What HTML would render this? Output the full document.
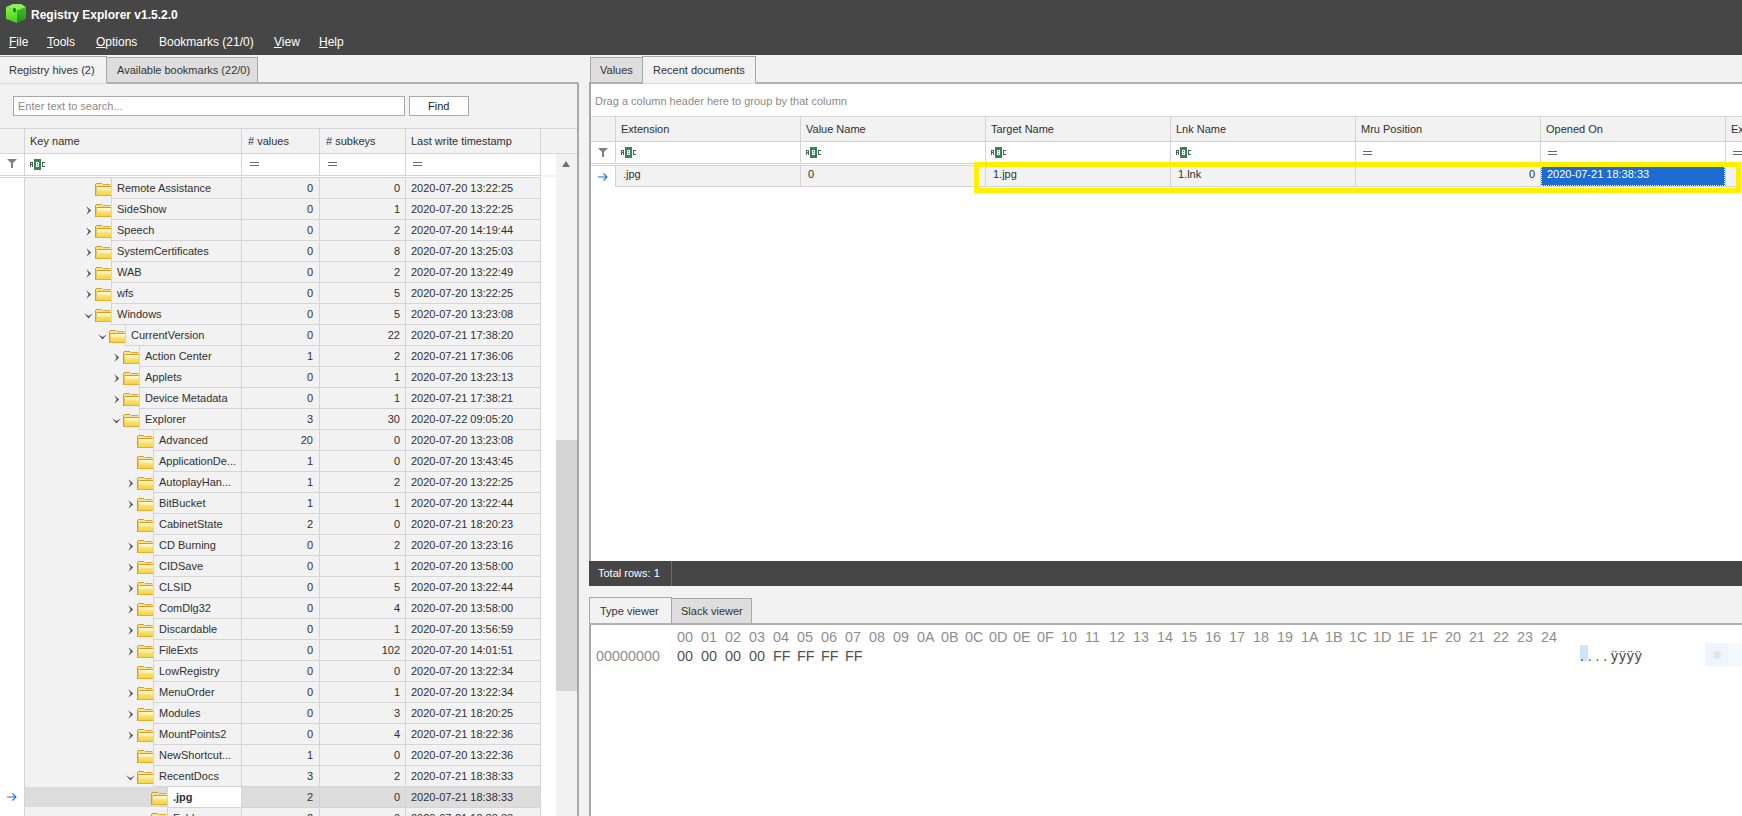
<!DOCTYPE html>
<html><head><meta charset="utf-8"><style>
*{margin:0;padding:0;box-sizing:border-box}
html,body{width:1742px;height:816px;overflow:hidden;background:#f2f2f2;font-family:"Liberation Sans", sans-serif;font-size:11px;color:#303030}
.t{position:absolute;white-space:nowrap;line-height:0;height:0}
.t>span{display:inline-block;vertical-align:baseline}
.r{position:absolute;white-space:nowrap;line-height:0;height:0;text-align:right}
</style></head>
<body>
<div style="position:absolute;left:0px;top:0px;width:1742px;height:55px;background:#464646"></div>
<svg style="position:absolute;left:0px;top:0px" width="30" height="28" viewBox="0 0 30 28">
<defs><linearGradient id="cl" x1="0" y1="0" x2="0" y2="1"><stop offset="0" stop-color="#86f83a"/><stop offset="1" stop-color="#48c828"/></linearGradient>
<linearGradient id="cr" x1="0" y1="0" x2="0" y2="1"><stop offset="0" stop-color="#48c030"/><stop offset="1" stop-color="#1f9016"/></linearGradient></defs>
<path d="M6 7 L17 10.5 L17 23 L6 19 Z" fill="url(#cl)"/>
<path d="M17 10.5 L26 7 L26 19 L17 23 Z" fill="url(#cr)"/>
<path d="M6 7 L13 4 L21 4 L26 7 L17 10.5 Z" fill="#8cf058"/>
<path d="M13 8.5 Q15 7.5 16 9 L15.5 12.5 Q13.5 12 13 11 Z" fill="#0e7a10"/>
</svg>
<div class="t" style="left:31px;top:14.84px;color:#fff;font-weight:bold;font-size:12px">Registry Explorer v1.5.2.0</div>
<div class="t" style="left:9px;top:41.84px;color:#fff;font-size:12px"><u style="text-decoration-thickness:1px;text-underline-offset:1px">F</u>ile</div>
<div class="t" style="left:47px;top:41.84px;color:#fff;font-size:12px"><u style="text-decoration-thickness:1px;text-underline-offset:1px">T</u>ools</div>
<div class="t" style="left:96px;top:41.84px;color:#fff;font-size:12px"><u style="text-decoration-thickness:1px;text-underline-offset:1px">O</u>ptions</div>
<div class="t" style="left:159px;top:41.84px;color:#fff;font-size:12px">Bookmarks (21/0)</div>
<div class="t" style="left:274px;top:41.84px;color:#fff;font-size:12px"><u style="text-decoration-thickness:1px;text-underline-offset:1px">V</u>iew</div>
<div class="t" style="left:319px;top:41.84px;color:#fff;font-size:12px"><u style="text-decoration-thickness:1px;text-underline-offset:1px">H</u>elp</div>
<div style="position:absolute;left:0px;top:55px;width:590px;height:28px;background:#f2f2f2"></div>
<div style="position:absolute;left:106px;top:57px;width:152px;height:27px;background:#dedede;border:1px solid #a8a8a8;border-bottom:none"></div>
<div class="t" style="left:117px;top:70.19px;font-size:11px;color:#333">Available bookmarks (22/0)</div>
<div style="position:absolute;left:0px;top:56px;width:107px;height:28px;background:#f2f2f2;border-top:1px solid #a8a8a8;border-right:1px solid #a8a8a8"></div>
<div class="t" style="left:9px;top:70.19px;font-size:11px;color:#333">Registry hives (2)</div>
<div style="position:absolute;left:107px;top:82px;width:471px;height:2px;background:#b0b0b0"></div>
<div style="position:absolute;left:0px;top:83px;width:107px;height:1px;background:#dcdcdc"></div>
<div style="position:absolute;left:577px;top:83px;width:2px;height:733px;background:#a8a8a8"></div>
<div style="position:absolute;left:13px;top:96px;width:392px;height:20px;background:#fff;border:1px solid #a8a8a8"></div>
<div class="t" style="left:18px;top:106.19px;color:#8a8a8a">Enter text to search...</div>
<div style="position:absolute;left:409px;top:96px;width:60px;height:20px;background:#fff;border:1px solid #a8a8a8"></div>
<div class="t" style="left:428px;top:106.19px;color:#222">Find</div>
<div style="position:absolute;left:0px;top:128px;width:577px;height:26px;background:#f2f2f2;border-top:1px solid #d4d4d4;border-bottom:1px solid #d4d4d4"></div>
<div style="position:absolute;left:24px;top:128px;width:1px;height:48px;background:#d4d4d4"></div>
<div style="position:absolute;left:241px;top:128px;width:1px;height:48px;background:#d4d4d4"></div>
<div style="position:absolute;left:319px;top:128px;width:1px;height:48px;background:#d4d4d4"></div>
<div style="position:absolute;left:405px;top:128px;width:1px;height:48px;background:#d4d4d4"></div>
<div style="position:absolute;left:540px;top:128px;width:1px;height:48px;background:#d4d4d4"></div>
<div class="t" style="left:30px;top:141.19px;">Key name</div>
<div class="t" style="left:248px;top:141.19px;"># values</div>
<div class="t" style="left:326px;top:141.19px;"># subkeys</div>
<div class="t" style="left:411px;top:141.19px;">Last write timestamp</div>
<div style="position:absolute;left:0px;top:154px;width:556px;height:21px;background:#fff"></div>
<div style="position:absolute;left:24px;top:154px;width:1px;height:21px;background:#d4d4d4"></div>
<div style="position:absolute;left:241px;top:154px;width:1px;height:21px;background:#d4d4d4"></div>
<div style="position:absolute;left:319px;top:154px;width:1px;height:21px;background:#d4d4d4"></div>
<div style="position:absolute;left:405px;top:154px;width:1px;height:21px;background:#d4d4d4"></div>
<div style="position:absolute;left:540px;top:154px;width:1px;height:21px;background:#d4d4d4"></div>
<div style="position:absolute;left:0px;top:175px;width:541px;height:1px;background:#d4d4d4"></div>
<div style="position:absolute;left:0px;top:176px;width:541px;height:1px;background:#fff"></div>
<svg style="position:absolute;left:7px;top:159px" width="10" height="9" viewBox="0 0 10 9"><path d="M0 0H10L6 4V9H4V4Z" fill="#808080"/></svg>
<svg style="position:absolute;left:30px;top:159px" width="16" height="11" viewBox="0 0 16 11" shape-rendering="crispEdges"><g fill="#5a5a5a"><rect x="0" y="3" width="1" height="1"/><rect x="1" y="3" width="1" height="1"/><rect x="2" y="3" width="1" height="1"/><rect x="0" y="4" width="1" height="1"/><rect x="2" y="4" width="1" height="1"/><rect x="0" y="5" width="1" height="1"/><rect x="1" y="5" width="1" height="1"/><rect x="2" y="5" width="1" height="1"/><rect x="0" y="6" width="1" height="1"/><rect x="2" y="6" width="1" height="1"/><rect x="0" y="7" width="1" height="1"/><rect x="2" y="7" width="1" height="1"/></g><rect x="4" y="0" width="7" height="11" rx="1" fill="#2f8a4e"/><g fill="#fff"><rect x="6" y="3" width="1" height="1"/><rect x="7" y="3" width="1" height="1"/><rect x="8" y="3" width="1" height="1"/><rect x="6" y="4" width="1" height="1"/><rect x="8" y="4" width="1" height="1"/><rect x="6" y="5" width="1" height="1"/><rect x="7" y="5" width="1" height="1"/><rect x="8" y="5" width="1" height="1"/><rect x="6" y="6" width="1" height="1"/><rect x="8" y="6" width="1" height="1"/><rect x="6" y="7" width="1" height="1"/><rect x="7" y="7" width="1" height="1"/><rect x="8" y="7" width="1" height="1"/></g><g fill="#5a5a5a"><rect x="12" y="3" width="1" height="1"/><rect x="13" y="3" width="1" height="1"/><rect x="14" y="3" width="1" height="1"/><rect x="12" y="4" width="1" height="1"/><rect x="12" y="5" width="1" height="1"/><rect x="12" y="6" width="1" height="1"/><rect x="12" y="7" width="1" height="1"/><rect x="13" y="7" width="1" height="1"/><rect x="14" y="7" width="1" height="1"/></g></svg>
<div style="position:absolute;left:250px;top:162px;width:9px;height:1px;background:#6a6a6a"></div>
<div style="position:absolute;left:250px;top:165px;width:9px;height:1px;background:#6a6a6a"></div>
<div style="position:absolute;left:328px;top:162px;width:9px;height:1px;background:#6a6a6a"></div>
<div style="position:absolute;left:328px;top:165px;width:9px;height:1px;background:#6a6a6a"></div>
<div style="position:absolute;left:413px;top:162px;width:9px;height:1px;background:#6a6a6a"></div>
<div style="position:absolute;left:413px;top:165px;width:9px;height:1px;background:#6a6a6a"></div>
<div style="position:absolute;left:556px;top:154px;width:21px;height:662px;background:#f2f2f2"></div>
<svg style="position:absolute;left:562px;top:161px" width="8" height="6" viewBox="0 0 8 6"><path d="M4 0L8 6H0Z" fill="#707070"/></svg>
<div style="position:absolute;left:556px;top:440px;width:21px;height:251px;background:#d4d4d4"></div>
<div style="position:absolute;left:0px;top:177px;width:24px;height:639px;background:#fff"></div>
<div style="position:absolute;left:541px;top:177px;width:15px;height:639px;background:#fff"></div>
<div style="position:absolute;left:24px;top:177px;width:517px;height:639px;background:#f2f2f2"></div>
<div style="position:absolute;left:0px;top:177px;width:541px;height:1px;background:#d4d4d4"></div>
<div style="position:absolute;left:24px;top:177px;width:1px;height:639px;background:#d4d4d4"></div>
<div style="position:absolute;left:111px;top:198px;width:430px;height:1px;background:#d4d4d4"></div>
<div style="position:absolute;left:111px;top:177px;width:1px;height:21px;background:#d4d4d4"></div>
<div style="position:absolute;left:241px;top:177px;width:1px;height:21px;background:#d4d4d4"></div>
<div style="position:absolute;left:319px;top:177px;width:1px;height:21px;background:#d4d4d4"></div>
<div style="position:absolute;left:405px;top:177px;width:1px;height:21px;background:#d4d4d4"></div>
<div style="position:absolute;left:540px;top:177px;width:1px;height:21px;background:#d4d4d4"></div>
<svg style="position:absolute;left:95px;top:183px" width="16" height="13" viewBox="0 0 16 13" shape-rendering="crispEdges">
<defs><linearGradient id="fg" x1="0" y1="0" x2="0" y2="1"><stop offset="0" stop-color="#fffce0"/><stop offset="0.35" stop-color="#fbeea0"/><stop offset="0.5" stop-color="#f6e070"/><stop offset="1" stop-color="#f2d648"/></linearGradient></defs>
<rect x="1" y="1" width="15" height="2" fill="#f8e48a"/>
<rect x="1" y="0" width="6" height="1" fill="#d99a30"/>
<rect x="8" y="1" width="7" height="1" fill="#dfa43a"/>
<rect x="0" y="1" width="1" height="12" fill="#dc9a28"/>
<rect x="1" y="3" width="1" height="10" fill="#f0c850"/>
<rect x="2" y="3" width="14" height="1" fill="#d9982a"/>
<rect x="2" y="4" width="14" height="8" fill="url(#fg)"/>
<rect x="1" y="12" width="15" height="1" fill="#e6ad2e"/>
</svg>
<div class="t" style="left:117px;top:188.19px;">Remote Assistance</div>
<div class="r" style="left:241px;width:72px;top:188.19px">0</div>
<div class="r" style="left:319px;width:81px;top:188.19px">0</div>
<div class="t" style="left:411px;top:188.19px;">2020-07-20 13:22:25</div>
<div style="position:absolute;left:111px;top:219px;width:430px;height:1px;background:#d4d4d4"></div>
<div style="position:absolute;left:111px;top:198px;width:1px;height:21px;background:#d4d4d4"></div>
<div style="position:absolute;left:241px;top:198px;width:1px;height:21px;background:#d4d4d4"></div>
<div style="position:absolute;left:319px;top:198px;width:1px;height:21px;background:#d4d4d4"></div>
<div style="position:absolute;left:405px;top:198px;width:1px;height:21px;background:#d4d4d4"></div>
<div style="position:absolute;left:540px;top:198px;width:1px;height:21px;background:#d4d4d4"></div>
<svg style="position:absolute;left:95px;top:204px" width="16" height="13" viewBox="0 0 16 13" shape-rendering="crispEdges">
<defs><linearGradient id="fg" x1="0" y1="0" x2="0" y2="1"><stop offset="0" stop-color="#fffce0"/><stop offset="0.35" stop-color="#fbeea0"/><stop offset="0.5" stop-color="#f6e070"/><stop offset="1" stop-color="#f2d648"/></linearGradient></defs>
<rect x="1" y="1" width="15" height="2" fill="#f8e48a"/>
<rect x="1" y="0" width="6" height="1" fill="#d99a30"/>
<rect x="8" y="1" width="7" height="1" fill="#dfa43a"/>
<rect x="0" y="1" width="1" height="12" fill="#dc9a28"/>
<rect x="1" y="3" width="1" height="10" fill="#f0c850"/>
<rect x="2" y="3" width="14" height="1" fill="#d9982a"/>
<rect x="2" y="4" width="14" height="8" fill="url(#fg)"/>
<rect x="1" y="12" width="15" height="1" fill="#e6ad2e"/>
</svg>
<svg style="position:absolute;left:86px;top:206px" width="6" height="9" viewBox="0 0 6 9"><path d="M0.3 0.3L5.2 4.5L0.3 8.7L2.6 4.5Z" fill="#555"/></svg>
<div class="t" style="left:117px;top:209.19px;">SideShow</div>
<div class="r" style="left:241px;width:72px;top:209.19px">0</div>
<div class="r" style="left:319px;width:81px;top:209.19px">1</div>
<div class="t" style="left:411px;top:209.19px;">2020-07-20 13:22:25</div>
<div style="position:absolute;left:111px;top:240px;width:430px;height:1px;background:#d4d4d4"></div>
<div style="position:absolute;left:111px;top:219px;width:1px;height:21px;background:#d4d4d4"></div>
<div style="position:absolute;left:241px;top:219px;width:1px;height:21px;background:#d4d4d4"></div>
<div style="position:absolute;left:319px;top:219px;width:1px;height:21px;background:#d4d4d4"></div>
<div style="position:absolute;left:405px;top:219px;width:1px;height:21px;background:#d4d4d4"></div>
<div style="position:absolute;left:540px;top:219px;width:1px;height:21px;background:#d4d4d4"></div>
<svg style="position:absolute;left:95px;top:225px" width="16" height="13" viewBox="0 0 16 13" shape-rendering="crispEdges">
<defs><linearGradient id="fg" x1="0" y1="0" x2="0" y2="1"><stop offset="0" stop-color="#fffce0"/><stop offset="0.35" stop-color="#fbeea0"/><stop offset="0.5" stop-color="#f6e070"/><stop offset="1" stop-color="#f2d648"/></linearGradient></defs>
<rect x="1" y="1" width="15" height="2" fill="#f8e48a"/>
<rect x="1" y="0" width="6" height="1" fill="#d99a30"/>
<rect x="8" y="1" width="7" height="1" fill="#dfa43a"/>
<rect x="0" y="1" width="1" height="12" fill="#dc9a28"/>
<rect x="1" y="3" width="1" height="10" fill="#f0c850"/>
<rect x="2" y="3" width="14" height="1" fill="#d9982a"/>
<rect x="2" y="4" width="14" height="8" fill="url(#fg)"/>
<rect x="1" y="12" width="15" height="1" fill="#e6ad2e"/>
</svg>
<svg style="position:absolute;left:86px;top:227px" width="6" height="9" viewBox="0 0 6 9"><path d="M0.3 0.3L5.2 4.5L0.3 8.7L2.6 4.5Z" fill="#555"/></svg>
<div class="t" style="left:117px;top:230.19px;">Speech</div>
<div class="r" style="left:241px;width:72px;top:230.19px">0</div>
<div class="r" style="left:319px;width:81px;top:230.19px">2</div>
<div class="t" style="left:411px;top:230.19px;">2020-07-20 14:19:44</div>
<div style="position:absolute;left:111px;top:261px;width:430px;height:1px;background:#d4d4d4"></div>
<div style="position:absolute;left:111px;top:240px;width:1px;height:21px;background:#d4d4d4"></div>
<div style="position:absolute;left:241px;top:240px;width:1px;height:21px;background:#d4d4d4"></div>
<div style="position:absolute;left:319px;top:240px;width:1px;height:21px;background:#d4d4d4"></div>
<div style="position:absolute;left:405px;top:240px;width:1px;height:21px;background:#d4d4d4"></div>
<div style="position:absolute;left:540px;top:240px;width:1px;height:21px;background:#d4d4d4"></div>
<svg style="position:absolute;left:95px;top:246px" width="16" height="13" viewBox="0 0 16 13" shape-rendering="crispEdges">
<defs><linearGradient id="fg" x1="0" y1="0" x2="0" y2="1"><stop offset="0" stop-color="#fffce0"/><stop offset="0.35" stop-color="#fbeea0"/><stop offset="0.5" stop-color="#f6e070"/><stop offset="1" stop-color="#f2d648"/></linearGradient></defs>
<rect x="1" y="1" width="15" height="2" fill="#f8e48a"/>
<rect x="1" y="0" width="6" height="1" fill="#d99a30"/>
<rect x="8" y="1" width="7" height="1" fill="#dfa43a"/>
<rect x="0" y="1" width="1" height="12" fill="#dc9a28"/>
<rect x="1" y="3" width="1" height="10" fill="#f0c850"/>
<rect x="2" y="3" width="14" height="1" fill="#d9982a"/>
<rect x="2" y="4" width="14" height="8" fill="url(#fg)"/>
<rect x="1" y="12" width="15" height="1" fill="#e6ad2e"/>
</svg>
<svg style="position:absolute;left:86px;top:248px" width="6" height="9" viewBox="0 0 6 9"><path d="M0.3 0.3L5.2 4.5L0.3 8.7L2.6 4.5Z" fill="#555"/></svg>
<div class="t" style="left:117px;top:251.19px;">SystemCertificates</div>
<div class="r" style="left:241px;width:72px;top:251.19px">0</div>
<div class="r" style="left:319px;width:81px;top:251.19px">8</div>
<div class="t" style="left:411px;top:251.19px;">2020-07-20 13:25:03</div>
<div style="position:absolute;left:111px;top:282px;width:430px;height:1px;background:#d4d4d4"></div>
<div style="position:absolute;left:111px;top:261px;width:1px;height:21px;background:#d4d4d4"></div>
<div style="position:absolute;left:241px;top:261px;width:1px;height:21px;background:#d4d4d4"></div>
<div style="position:absolute;left:319px;top:261px;width:1px;height:21px;background:#d4d4d4"></div>
<div style="position:absolute;left:405px;top:261px;width:1px;height:21px;background:#d4d4d4"></div>
<div style="position:absolute;left:540px;top:261px;width:1px;height:21px;background:#d4d4d4"></div>
<svg style="position:absolute;left:95px;top:267px" width="16" height="13" viewBox="0 0 16 13" shape-rendering="crispEdges">
<defs><linearGradient id="fg" x1="0" y1="0" x2="0" y2="1"><stop offset="0" stop-color="#fffce0"/><stop offset="0.35" stop-color="#fbeea0"/><stop offset="0.5" stop-color="#f6e070"/><stop offset="1" stop-color="#f2d648"/></linearGradient></defs>
<rect x="1" y="1" width="15" height="2" fill="#f8e48a"/>
<rect x="1" y="0" width="6" height="1" fill="#d99a30"/>
<rect x="8" y="1" width="7" height="1" fill="#dfa43a"/>
<rect x="0" y="1" width="1" height="12" fill="#dc9a28"/>
<rect x="1" y="3" width="1" height="10" fill="#f0c850"/>
<rect x="2" y="3" width="14" height="1" fill="#d9982a"/>
<rect x="2" y="4" width="14" height="8" fill="url(#fg)"/>
<rect x="1" y="12" width="15" height="1" fill="#e6ad2e"/>
</svg>
<svg style="position:absolute;left:86px;top:269px" width="6" height="9" viewBox="0 0 6 9"><path d="M0.3 0.3L5.2 4.5L0.3 8.7L2.6 4.5Z" fill="#555"/></svg>
<div class="t" style="left:117px;top:272.19px;">WAB</div>
<div class="r" style="left:241px;width:72px;top:272.19px">0</div>
<div class="r" style="left:319px;width:81px;top:272.19px">2</div>
<div class="t" style="left:411px;top:272.19px;">2020-07-20 13:22:49</div>
<div style="position:absolute;left:111px;top:303px;width:430px;height:1px;background:#d4d4d4"></div>
<div style="position:absolute;left:111px;top:282px;width:1px;height:21px;background:#d4d4d4"></div>
<div style="position:absolute;left:241px;top:282px;width:1px;height:21px;background:#d4d4d4"></div>
<div style="position:absolute;left:319px;top:282px;width:1px;height:21px;background:#d4d4d4"></div>
<div style="position:absolute;left:405px;top:282px;width:1px;height:21px;background:#d4d4d4"></div>
<div style="position:absolute;left:540px;top:282px;width:1px;height:21px;background:#d4d4d4"></div>
<svg style="position:absolute;left:95px;top:288px" width="16" height="13" viewBox="0 0 16 13" shape-rendering="crispEdges">
<defs><linearGradient id="fg" x1="0" y1="0" x2="0" y2="1"><stop offset="0" stop-color="#fffce0"/><stop offset="0.35" stop-color="#fbeea0"/><stop offset="0.5" stop-color="#f6e070"/><stop offset="1" stop-color="#f2d648"/></linearGradient></defs>
<rect x="1" y="1" width="15" height="2" fill="#f8e48a"/>
<rect x="1" y="0" width="6" height="1" fill="#d99a30"/>
<rect x="8" y="1" width="7" height="1" fill="#dfa43a"/>
<rect x="0" y="1" width="1" height="12" fill="#dc9a28"/>
<rect x="1" y="3" width="1" height="10" fill="#f0c850"/>
<rect x="2" y="3" width="14" height="1" fill="#d9982a"/>
<rect x="2" y="4" width="14" height="8" fill="url(#fg)"/>
<rect x="1" y="12" width="15" height="1" fill="#e6ad2e"/>
</svg>
<svg style="position:absolute;left:86px;top:290px" width="6" height="9" viewBox="0 0 6 9"><path d="M0.3 0.3L5.2 4.5L0.3 8.7L2.6 4.5Z" fill="#555"/></svg>
<div class="t" style="left:117px;top:293.19px;">wfs</div>
<div class="r" style="left:241px;width:72px;top:293.19px">0</div>
<div class="r" style="left:319px;width:81px;top:293.19px">5</div>
<div class="t" style="left:411px;top:293.19px;">2020-07-20 13:22:25</div>
<div style="position:absolute;left:111px;top:324px;width:430px;height:1px;background:#d4d4d4"></div>
<div style="position:absolute;left:111px;top:303px;width:1px;height:21px;background:#d4d4d4"></div>
<div style="position:absolute;left:241px;top:303px;width:1px;height:21px;background:#d4d4d4"></div>
<div style="position:absolute;left:319px;top:303px;width:1px;height:21px;background:#d4d4d4"></div>
<div style="position:absolute;left:405px;top:303px;width:1px;height:21px;background:#d4d4d4"></div>
<div style="position:absolute;left:540px;top:303px;width:1px;height:21px;background:#d4d4d4"></div>
<svg style="position:absolute;left:95px;top:309px" width="16" height="13" viewBox="0 0 16 13" shape-rendering="crispEdges">
<defs><linearGradient id="fg" x1="0" y1="0" x2="0" y2="1"><stop offset="0" stop-color="#fffce0"/><stop offset="0.35" stop-color="#fbeea0"/><stop offset="0.5" stop-color="#f6e070"/><stop offset="1" stop-color="#f2d648"/></linearGradient></defs>
<rect x="1" y="1" width="15" height="2" fill="#f8e48a"/>
<rect x="1" y="0" width="6" height="1" fill="#d99a30"/>
<rect x="8" y="1" width="7" height="1" fill="#dfa43a"/>
<rect x="0" y="1" width="1" height="12" fill="#dc9a28"/>
<rect x="1" y="3" width="1" height="10" fill="#f0c850"/>
<rect x="2" y="3" width="14" height="1" fill="#d9982a"/>
<rect x="2" y="4" width="14" height="8" fill="url(#fg)"/>
<rect x="1" y="12" width="15" height="1" fill="#e6ad2e"/>
</svg>
<svg style="position:absolute;left:84px;top:313px" width="9" height="6" viewBox="0 0 9 6"><path d="M0.2 0.5L4.5 5.6L8.8 0.5L4.5 3Z" fill="#555"/></svg>
<div class="t" style="left:117px;top:314.19px;">Windows</div>
<div class="r" style="left:241px;width:72px;top:314.19px">0</div>
<div class="r" style="left:319px;width:81px;top:314.19px">5</div>
<div class="t" style="left:411px;top:314.19px;">2020-07-20 13:23:08</div>
<div style="position:absolute;left:125px;top:345px;width:416px;height:1px;background:#d4d4d4"></div>
<div style="position:absolute;left:125px;top:324px;width:1px;height:21px;background:#d4d4d4"></div>
<div style="position:absolute;left:241px;top:324px;width:1px;height:21px;background:#d4d4d4"></div>
<div style="position:absolute;left:319px;top:324px;width:1px;height:21px;background:#d4d4d4"></div>
<div style="position:absolute;left:405px;top:324px;width:1px;height:21px;background:#d4d4d4"></div>
<div style="position:absolute;left:540px;top:324px;width:1px;height:21px;background:#d4d4d4"></div>
<svg style="position:absolute;left:109px;top:330px" width="16" height="13" viewBox="0 0 16 13" shape-rendering="crispEdges">
<defs><linearGradient id="fg" x1="0" y1="0" x2="0" y2="1"><stop offset="0" stop-color="#fffce0"/><stop offset="0.35" stop-color="#fbeea0"/><stop offset="0.5" stop-color="#f6e070"/><stop offset="1" stop-color="#f2d648"/></linearGradient></defs>
<rect x="1" y="1" width="15" height="2" fill="#f8e48a"/>
<rect x="1" y="0" width="6" height="1" fill="#d99a30"/>
<rect x="8" y="1" width="7" height="1" fill="#dfa43a"/>
<rect x="0" y="1" width="1" height="12" fill="#dc9a28"/>
<rect x="1" y="3" width="1" height="10" fill="#f0c850"/>
<rect x="2" y="3" width="14" height="1" fill="#d9982a"/>
<rect x="2" y="4" width="14" height="8" fill="url(#fg)"/>
<rect x="1" y="12" width="15" height="1" fill="#e6ad2e"/>
</svg>
<svg style="position:absolute;left:98px;top:334px" width="9" height="6" viewBox="0 0 9 6"><path d="M0.2 0.5L4.5 5.6L8.8 0.5L4.5 3Z" fill="#555"/></svg>
<div class="t" style="left:131px;top:335.19px;">CurrentVersion</div>
<div class="r" style="left:241px;width:72px;top:335.19px">0</div>
<div class="r" style="left:319px;width:81px;top:335.19px">22</div>
<div class="t" style="left:411px;top:335.19px;">2020-07-21 17:38:20</div>
<div style="position:absolute;left:139px;top:366px;width:402px;height:1px;background:#d4d4d4"></div>
<div style="position:absolute;left:139px;top:345px;width:1px;height:21px;background:#d4d4d4"></div>
<div style="position:absolute;left:241px;top:345px;width:1px;height:21px;background:#d4d4d4"></div>
<div style="position:absolute;left:319px;top:345px;width:1px;height:21px;background:#d4d4d4"></div>
<div style="position:absolute;left:405px;top:345px;width:1px;height:21px;background:#d4d4d4"></div>
<div style="position:absolute;left:540px;top:345px;width:1px;height:21px;background:#d4d4d4"></div>
<svg style="position:absolute;left:123px;top:351px" width="16" height="13" viewBox="0 0 16 13" shape-rendering="crispEdges">
<defs><linearGradient id="fg" x1="0" y1="0" x2="0" y2="1"><stop offset="0" stop-color="#fffce0"/><stop offset="0.35" stop-color="#fbeea0"/><stop offset="0.5" stop-color="#f6e070"/><stop offset="1" stop-color="#f2d648"/></linearGradient></defs>
<rect x="1" y="1" width="15" height="2" fill="#f8e48a"/>
<rect x="1" y="0" width="6" height="1" fill="#d99a30"/>
<rect x="8" y="1" width="7" height="1" fill="#dfa43a"/>
<rect x="0" y="1" width="1" height="12" fill="#dc9a28"/>
<rect x="1" y="3" width="1" height="10" fill="#f0c850"/>
<rect x="2" y="3" width="14" height="1" fill="#d9982a"/>
<rect x="2" y="4" width="14" height="8" fill="url(#fg)"/>
<rect x="1" y="12" width="15" height="1" fill="#e6ad2e"/>
</svg>
<svg style="position:absolute;left:114px;top:353px" width="6" height="9" viewBox="0 0 6 9"><path d="M0.3 0.3L5.2 4.5L0.3 8.7L2.6 4.5Z" fill="#555"/></svg>
<div class="t" style="left:145px;top:356.19px;">Action Center</div>
<div class="r" style="left:241px;width:72px;top:356.19px">1</div>
<div class="r" style="left:319px;width:81px;top:356.19px">2</div>
<div class="t" style="left:411px;top:356.19px;">2020-07-21 17:36:06</div>
<div style="position:absolute;left:139px;top:387px;width:402px;height:1px;background:#d4d4d4"></div>
<div style="position:absolute;left:139px;top:366px;width:1px;height:21px;background:#d4d4d4"></div>
<div style="position:absolute;left:241px;top:366px;width:1px;height:21px;background:#d4d4d4"></div>
<div style="position:absolute;left:319px;top:366px;width:1px;height:21px;background:#d4d4d4"></div>
<div style="position:absolute;left:405px;top:366px;width:1px;height:21px;background:#d4d4d4"></div>
<div style="position:absolute;left:540px;top:366px;width:1px;height:21px;background:#d4d4d4"></div>
<svg style="position:absolute;left:123px;top:372px" width="16" height="13" viewBox="0 0 16 13" shape-rendering="crispEdges">
<defs><linearGradient id="fg" x1="0" y1="0" x2="0" y2="1"><stop offset="0" stop-color="#fffce0"/><stop offset="0.35" stop-color="#fbeea0"/><stop offset="0.5" stop-color="#f6e070"/><stop offset="1" stop-color="#f2d648"/></linearGradient></defs>
<rect x="1" y="1" width="15" height="2" fill="#f8e48a"/>
<rect x="1" y="0" width="6" height="1" fill="#d99a30"/>
<rect x="8" y="1" width="7" height="1" fill="#dfa43a"/>
<rect x="0" y="1" width="1" height="12" fill="#dc9a28"/>
<rect x="1" y="3" width="1" height="10" fill="#f0c850"/>
<rect x="2" y="3" width="14" height="1" fill="#d9982a"/>
<rect x="2" y="4" width="14" height="8" fill="url(#fg)"/>
<rect x="1" y="12" width="15" height="1" fill="#e6ad2e"/>
</svg>
<svg style="position:absolute;left:114px;top:374px" width="6" height="9" viewBox="0 0 6 9"><path d="M0.3 0.3L5.2 4.5L0.3 8.7L2.6 4.5Z" fill="#555"/></svg>
<div class="t" style="left:145px;top:377.19px;">Applets</div>
<div class="r" style="left:241px;width:72px;top:377.19px">0</div>
<div class="r" style="left:319px;width:81px;top:377.19px">1</div>
<div class="t" style="left:411px;top:377.19px;">2020-07-20 13:23:13</div>
<div style="position:absolute;left:139px;top:408px;width:402px;height:1px;background:#d4d4d4"></div>
<div style="position:absolute;left:139px;top:387px;width:1px;height:21px;background:#d4d4d4"></div>
<div style="position:absolute;left:241px;top:387px;width:1px;height:21px;background:#d4d4d4"></div>
<div style="position:absolute;left:319px;top:387px;width:1px;height:21px;background:#d4d4d4"></div>
<div style="position:absolute;left:405px;top:387px;width:1px;height:21px;background:#d4d4d4"></div>
<div style="position:absolute;left:540px;top:387px;width:1px;height:21px;background:#d4d4d4"></div>
<svg style="position:absolute;left:123px;top:393px" width="16" height="13" viewBox="0 0 16 13" shape-rendering="crispEdges">
<defs><linearGradient id="fg" x1="0" y1="0" x2="0" y2="1"><stop offset="0" stop-color="#fffce0"/><stop offset="0.35" stop-color="#fbeea0"/><stop offset="0.5" stop-color="#f6e070"/><stop offset="1" stop-color="#f2d648"/></linearGradient></defs>
<rect x="1" y="1" width="15" height="2" fill="#f8e48a"/>
<rect x="1" y="0" width="6" height="1" fill="#d99a30"/>
<rect x="8" y="1" width="7" height="1" fill="#dfa43a"/>
<rect x="0" y="1" width="1" height="12" fill="#dc9a28"/>
<rect x="1" y="3" width="1" height="10" fill="#f0c850"/>
<rect x="2" y="3" width="14" height="1" fill="#d9982a"/>
<rect x="2" y="4" width="14" height="8" fill="url(#fg)"/>
<rect x="1" y="12" width="15" height="1" fill="#e6ad2e"/>
</svg>
<svg style="position:absolute;left:114px;top:395px" width="6" height="9" viewBox="0 0 6 9"><path d="M0.3 0.3L5.2 4.5L0.3 8.7L2.6 4.5Z" fill="#555"/></svg>
<div class="t" style="left:145px;top:398.19px;">Device Metadata</div>
<div class="r" style="left:241px;width:72px;top:398.19px">0</div>
<div class="r" style="left:319px;width:81px;top:398.19px">1</div>
<div class="t" style="left:411px;top:398.19px;">2020-07-21 17:38:21</div>
<div style="position:absolute;left:139px;top:429px;width:402px;height:1px;background:#d4d4d4"></div>
<div style="position:absolute;left:139px;top:408px;width:1px;height:21px;background:#d4d4d4"></div>
<div style="position:absolute;left:241px;top:408px;width:1px;height:21px;background:#d4d4d4"></div>
<div style="position:absolute;left:319px;top:408px;width:1px;height:21px;background:#d4d4d4"></div>
<div style="position:absolute;left:405px;top:408px;width:1px;height:21px;background:#d4d4d4"></div>
<div style="position:absolute;left:540px;top:408px;width:1px;height:21px;background:#d4d4d4"></div>
<svg style="position:absolute;left:123px;top:414px" width="16" height="13" viewBox="0 0 16 13" shape-rendering="crispEdges">
<defs><linearGradient id="fg" x1="0" y1="0" x2="0" y2="1"><stop offset="0" stop-color="#fffce0"/><stop offset="0.35" stop-color="#fbeea0"/><stop offset="0.5" stop-color="#f6e070"/><stop offset="1" stop-color="#f2d648"/></linearGradient></defs>
<rect x="1" y="1" width="15" height="2" fill="#f8e48a"/>
<rect x="1" y="0" width="6" height="1" fill="#d99a30"/>
<rect x="8" y="1" width="7" height="1" fill="#dfa43a"/>
<rect x="0" y="1" width="1" height="12" fill="#dc9a28"/>
<rect x="1" y="3" width="1" height="10" fill="#f0c850"/>
<rect x="2" y="3" width="14" height="1" fill="#d9982a"/>
<rect x="2" y="4" width="14" height="8" fill="url(#fg)"/>
<rect x="1" y="12" width="15" height="1" fill="#e6ad2e"/>
</svg>
<svg style="position:absolute;left:112px;top:418px" width="9" height="6" viewBox="0 0 9 6"><path d="M0.2 0.5L4.5 5.6L8.8 0.5L4.5 3Z" fill="#555"/></svg>
<div class="t" style="left:145px;top:419.19px;">Explorer</div>
<div class="r" style="left:241px;width:72px;top:419.19px">3</div>
<div class="r" style="left:319px;width:81px;top:419.19px">30</div>
<div class="t" style="left:411px;top:419.19px;">2020-07-22 09:05:20</div>
<div style="position:absolute;left:153px;top:450px;width:388px;height:1px;background:#d4d4d4"></div>
<div style="position:absolute;left:153px;top:429px;width:1px;height:21px;background:#d4d4d4"></div>
<div style="position:absolute;left:241px;top:429px;width:1px;height:21px;background:#d4d4d4"></div>
<div style="position:absolute;left:319px;top:429px;width:1px;height:21px;background:#d4d4d4"></div>
<div style="position:absolute;left:405px;top:429px;width:1px;height:21px;background:#d4d4d4"></div>
<div style="position:absolute;left:540px;top:429px;width:1px;height:21px;background:#d4d4d4"></div>
<svg style="position:absolute;left:137px;top:435px" width="16" height="13" viewBox="0 0 16 13" shape-rendering="crispEdges">
<defs><linearGradient id="fg" x1="0" y1="0" x2="0" y2="1"><stop offset="0" stop-color="#fffce0"/><stop offset="0.35" stop-color="#fbeea0"/><stop offset="0.5" stop-color="#f6e070"/><stop offset="1" stop-color="#f2d648"/></linearGradient></defs>
<rect x="1" y="1" width="15" height="2" fill="#f8e48a"/>
<rect x="1" y="0" width="6" height="1" fill="#d99a30"/>
<rect x="8" y="1" width="7" height="1" fill="#dfa43a"/>
<rect x="0" y="1" width="1" height="12" fill="#dc9a28"/>
<rect x="1" y="3" width="1" height="10" fill="#f0c850"/>
<rect x="2" y="3" width="14" height="1" fill="#d9982a"/>
<rect x="2" y="4" width="14" height="8" fill="url(#fg)"/>
<rect x="1" y="12" width="15" height="1" fill="#e6ad2e"/>
</svg>
<div class="t" style="left:159px;top:440.19px;">Advanced</div>
<div class="r" style="left:241px;width:72px;top:440.19px">20</div>
<div class="r" style="left:319px;width:81px;top:440.19px">0</div>
<div class="t" style="left:411px;top:440.19px;">2020-07-20 13:23:08</div>
<div style="position:absolute;left:153px;top:471px;width:388px;height:1px;background:#d4d4d4"></div>
<div style="position:absolute;left:153px;top:450px;width:1px;height:21px;background:#d4d4d4"></div>
<div style="position:absolute;left:241px;top:450px;width:1px;height:21px;background:#d4d4d4"></div>
<div style="position:absolute;left:319px;top:450px;width:1px;height:21px;background:#d4d4d4"></div>
<div style="position:absolute;left:405px;top:450px;width:1px;height:21px;background:#d4d4d4"></div>
<div style="position:absolute;left:540px;top:450px;width:1px;height:21px;background:#d4d4d4"></div>
<svg style="position:absolute;left:137px;top:456px" width="16" height="13" viewBox="0 0 16 13" shape-rendering="crispEdges">
<defs><linearGradient id="fg" x1="0" y1="0" x2="0" y2="1"><stop offset="0" stop-color="#fffce0"/><stop offset="0.35" stop-color="#fbeea0"/><stop offset="0.5" stop-color="#f6e070"/><stop offset="1" stop-color="#f2d648"/></linearGradient></defs>
<rect x="1" y="1" width="15" height="2" fill="#f8e48a"/>
<rect x="1" y="0" width="6" height="1" fill="#d99a30"/>
<rect x="8" y="1" width="7" height="1" fill="#dfa43a"/>
<rect x="0" y="1" width="1" height="12" fill="#dc9a28"/>
<rect x="1" y="3" width="1" height="10" fill="#f0c850"/>
<rect x="2" y="3" width="14" height="1" fill="#d9982a"/>
<rect x="2" y="4" width="14" height="8" fill="url(#fg)"/>
<rect x="1" y="12" width="15" height="1" fill="#e6ad2e"/>
</svg>
<div class="t" style="left:159px;top:461.19px;">ApplicationDe...</div>
<div class="r" style="left:241px;width:72px;top:461.19px">1</div>
<div class="r" style="left:319px;width:81px;top:461.19px">0</div>
<div class="t" style="left:411px;top:461.19px;">2020-07-20 13:43:45</div>
<div style="position:absolute;left:153px;top:492px;width:388px;height:1px;background:#d4d4d4"></div>
<div style="position:absolute;left:153px;top:471px;width:1px;height:21px;background:#d4d4d4"></div>
<div style="position:absolute;left:241px;top:471px;width:1px;height:21px;background:#d4d4d4"></div>
<div style="position:absolute;left:319px;top:471px;width:1px;height:21px;background:#d4d4d4"></div>
<div style="position:absolute;left:405px;top:471px;width:1px;height:21px;background:#d4d4d4"></div>
<div style="position:absolute;left:540px;top:471px;width:1px;height:21px;background:#d4d4d4"></div>
<svg style="position:absolute;left:137px;top:477px" width="16" height="13" viewBox="0 0 16 13" shape-rendering="crispEdges">
<defs><linearGradient id="fg" x1="0" y1="0" x2="0" y2="1"><stop offset="0" stop-color="#fffce0"/><stop offset="0.35" stop-color="#fbeea0"/><stop offset="0.5" stop-color="#f6e070"/><stop offset="1" stop-color="#f2d648"/></linearGradient></defs>
<rect x="1" y="1" width="15" height="2" fill="#f8e48a"/>
<rect x="1" y="0" width="6" height="1" fill="#d99a30"/>
<rect x="8" y="1" width="7" height="1" fill="#dfa43a"/>
<rect x="0" y="1" width="1" height="12" fill="#dc9a28"/>
<rect x="1" y="3" width="1" height="10" fill="#f0c850"/>
<rect x="2" y="3" width="14" height="1" fill="#d9982a"/>
<rect x="2" y="4" width="14" height="8" fill="url(#fg)"/>
<rect x="1" y="12" width="15" height="1" fill="#e6ad2e"/>
</svg>
<svg style="position:absolute;left:128px;top:479px" width="6" height="9" viewBox="0 0 6 9"><path d="M0.3 0.3L5.2 4.5L0.3 8.7L2.6 4.5Z" fill="#555"/></svg>
<div class="t" style="left:159px;top:482.19px;">AutoplayHan...</div>
<div class="r" style="left:241px;width:72px;top:482.19px">1</div>
<div class="r" style="left:319px;width:81px;top:482.19px">2</div>
<div class="t" style="left:411px;top:482.19px;">2020-07-20 13:22:25</div>
<div style="position:absolute;left:153px;top:513px;width:388px;height:1px;background:#d4d4d4"></div>
<div style="position:absolute;left:153px;top:492px;width:1px;height:21px;background:#d4d4d4"></div>
<div style="position:absolute;left:241px;top:492px;width:1px;height:21px;background:#d4d4d4"></div>
<div style="position:absolute;left:319px;top:492px;width:1px;height:21px;background:#d4d4d4"></div>
<div style="position:absolute;left:405px;top:492px;width:1px;height:21px;background:#d4d4d4"></div>
<div style="position:absolute;left:540px;top:492px;width:1px;height:21px;background:#d4d4d4"></div>
<svg style="position:absolute;left:137px;top:498px" width="16" height="13" viewBox="0 0 16 13" shape-rendering="crispEdges">
<defs><linearGradient id="fg" x1="0" y1="0" x2="0" y2="1"><stop offset="0" stop-color="#fffce0"/><stop offset="0.35" stop-color="#fbeea0"/><stop offset="0.5" stop-color="#f6e070"/><stop offset="1" stop-color="#f2d648"/></linearGradient></defs>
<rect x="1" y="1" width="15" height="2" fill="#f8e48a"/>
<rect x="1" y="0" width="6" height="1" fill="#d99a30"/>
<rect x="8" y="1" width="7" height="1" fill="#dfa43a"/>
<rect x="0" y="1" width="1" height="12" fill="#dc9a28"/>
<rect x="1" y="3" width="1" height="10" fill="#f0c850"/>
<rect x="2" y="3" width="14" height="1" fill="#d9982a"/>
<rect x="2" y="4" width="14" height="8" fill="url(#fg)"/>
<rect x="1" y="12" width="15" height="1" fill="#e6ad2e"/>
</svg>
<svg style="position:absolute;left:128px;top:500px" width="6" height="9" viewBox="0 0 6 9"><path d="M0.3 0.3L5.2 4.5L0.3 8.7L2.6 4.5Z" fill="#555"/></svg>
<div class="t" style="left:159px;top:503.19px;">BitBucket</div>
<div class="r" style="left:241px;width:72px;top:503.19px">1</div>
<div class="r" style="left:319px;width:81px;top:503.19px">1</div>
<div class="t" style="left:411px;top:503.19px;">2020-07-20 13:22:44</div>
<div style="position:absolute;left:153px;top:534px;width:388px;height:1px;background:#d4d4d4"></div>
<div style="position:absolute;left:153px;top:513px;width:1px;height:21px;background:#d4d4d4"></div>
<div style="position:absolute;left:241px;top:513px;width:1px;height:21px;background:#d4d4d4"></div>
<div style="position:absolute;left:319px;top:513px;width:1px;height:21px;background:#d4d4d4"></div>
<div style="position:absolute;left:405px;top:513px;width:1px;height:21px;background:#d4d4d4"></div>
<div style="position:absolute;left:540px;top:513px;width:1px;height:21px;background:#d4d4d4"></div>
<svg style="position:absolute;left:137px;top:519px" width="16" height="13" viewBox="0 0 16 13" shape-rendering="crispEdges">
<defs><linearGradient id="fg" x1="0" y1="0" x2="0" y2="1"><stop offset="0" stop-color="#fffce0"/><stop offset="0.35" stop-color="#fbeea0"/><stop offset="0.5" stop-color="#f6e070"/><stop offset="1" stop-color="#f2d648"/></linearGradient></defs>
<rect x="1" y="1" width="15" height="2" fill="#f8e48a"/>
<rect x="1" y="0" width="6" height="1" fill="#d99a30"/>
<rect x="8" y="1" width="7" height="1" fill="#dfa43a"/>
<rect x="0" y="1" width="1" height="12" fill="#dc9a28"/>
<rect x="1" y="3" width="1" height="10" fill="#f0c850"/>
<rect x="2" y="3" width="14" height="1" fill="#d9982a"/>
<rect x="2" y="4" width="14" height="8" fill="url(#fg)"/>
<rect x="1" y="12" width="15" height="1" fill="#e6ad2e"/>
</svg>
<div class="t" style="left:159px;top:524.19px;">CabinetState</div>
<div class="r" style="left:241px;width:72px;top:524.19px">2</div>
<div class="r" style="left:319px;width:81px;top:524.19px">0</div>
<div class="t" style="left:411px;top:524.19px;">2020-07-21 18:20:23</div>
<div style="position:absolute;left:153px;top:555px;width:388px;height:1px;background:#d4d4d4"></div>
<div style="position:absolute;left:153px;top:534px;width:1px;height:21px;background:#d4d4d4"></div>
<div style="position:absolute;left:241px;top:534px;width:1px;height:21px;background:#d4d4d4"></div>
<div style="position:absolute;left:319px;top:534px;width:1px;height:21px;background:#d4d4d4"></div>
<div style="position:absolute;left:405px;top:534px;width:1px;height:21px;background:#d4d4d4"></div>
<div style="position:absolute;left:540px;top:534px;width:1px;height:21px;background:#d4d4d4"></div>
<svg style="position:absolute;left:137px;top:540px" width="16" height="13" viewBox="0 0 16 13" shape-rendering="crispEdges">
<defs><linearGradient id="fg" x1="0" y1="0" x2="0" y2="1"><stop offset="0" stop-color="#fffce0"/><stop offset="0.35" stop-color="#fbeea0"/><stop offset="0.5" stop-color="#f6e070"/><stop offset="1" stop-color="#f2d648"/></linearGradient></defs>
<rect x="1" y="1" width="15" height="2" fill="#f8e48a"/>
<rect x="1" y="0" width="6" height="1" fill="#d99a30"/>
<rect x="8" y="1" width="7" height="1" fill="#dfa43a"/>
<rect x="0" y="1" width="1" height="12" fill="#dc9a28"/>
<rect x="1" y="3" width="1" height="10" fill="#f0c850"/>
<rect x="2" y="3" width="14" height="1" fill="#d9982a"/>
<rect x="2" y="4" width="14" height="8" fill="url(#fg)"/>
<rect x="1" y="12" width="15" height="1" fill="#e6ad2e"/>
</svg>
<svg style="position:absolute;left:128px;top:542px" width="6" height="9" viewBox="0 0 6 9"><path d="M0.3 0.3L5.2 4.5L0.3 8.7L2.6 4.5Z" fill="#555"/></svg>
<div class="t" style="left:159px;top:545.19px;">CD Burning</div>
<div class="r" style="left:241px;width:72px;top:545.19px">0</div>
<div class="r" style="left:319px;width:81px;top:545.19px">2</div>
<div class="t" style="left:411px;top:545.19px;">2020-07-20 13:23:16</div>
<div style="position:absolute;left:153px;top:576px;width:388px;height:1px;background:#d4d4d4"></div>
<div style="position:absolute;left:153px;top:555px;width:1px;height:21px;background:#d4d4d4"></div>
<div style="position:absolute;left:241px;top:555px;width:1px;height:21px;background:#d4d4d4"></div>
<div style="position:absolute;left:319px;top:555px;width:1px;height:21px;background:#d4d4d4"></div>
<div style="position:absolute;left:405px;top:555px;width:1px;height:21px;background:#d4d4d4"></div>
<div style="position:absolute;left:540px;top:555px;width:1px;height:21px;background:#d4d4d4"></div>
<svg style="position:absolute;left:137px;top:561px" width="16" height="13" viewBox="0 0 16 13" shape-rendering="crispEdges">
<defs><linearGradient id="fg" x1="0" y1="0" x2="0" y2="1"><stop offset="0" stop-color="#fffce0"/><stop offset="0.35" stop-color="#fbeea0"/><stop offset="0.5" stop-color="#f6e070"/><stop offset="1" stop-color="#f2d648"/></linearGradient></defs>
<rect x="1" y="1" width="15" height="2" fill="#f8e48a"/>
<rect x="1" y="0" width="6" height="1" fill="#d99a30"/>
<rect x="8" y="1" width="7" height="1" fill="#dfa43a"/>
<rect x="0" y="1" width="1" height="12" fill="#dc9a28"/>
<rect x="1" y="3" width="1" height="10" fill="#f0c850"/>
<rect x="2" y="3" width="14" height="1" fill="#d9982a"/>
<rect x="2" y="4" width="14" height="8" fill="url(#fg)"/>
<rect x="1" y="12" width="15" height="1" fill="#e6ad2e"/>
</svg>
<svg style="position:absolute;left:128px;top:563px" width="6" height="9" viewBox="0 0 6 9"><path d="M0.3 0.3L5.2 4.5L0.3 8.7L2.6 4.5Z" fill="#555"/></svg>
<div class="t" style="left:159px;top:566.19px;">CIDSave</div>
<div class="r" style="left:241px;width:72px;top:566.19px">0</div>
<div class="r" style="left:319px;width:81px;top:566.19px">1</div>
<div class="t" style="left:411px;top:566.19px;">2020-07-20 13:58:00</div>
<div style="position:absolute;left:153px;top:597px;width:388px;height:1px;background:#d4d4d4"></div>
<div style="position:absolute;left:153px;top:576px;width:1px;height:21px;background:#d4d4d4"></div>
<div style="position:absolute;left:241px;top:576px;width:1px;height:21px;background:#d4d4d4"></div>
<div style="position:absolute;left:319px;top:576px;width:1px;height:21px;background:#d4d4d4"></div>
<div style="position:absolute;left:405px;top:576px;width:1px;height:21px;background:#d4d4d4"></div>
<div style="position:absolute;left:540px;top:576px;width:1px;height:21px;background:#d4d4d4"></div>
<svg style="position:absolute;left:137px;top:582px" width="16" height="13" viewBox="0 0 16 13" shape-rendering="crispEdges">
<defs><linearGradient id="fg" x1="0" y1="0" x2="0" y2="1"><stop offset="0" stop-color="#fffce0"/><stop offset="0.35" stop-color="#fbeea0"/><stop offset="0.5" stop-color="#f6e070"/><stop offset="1" stop-color="#f2d648"/></linearGradient></defs>
<rect x="1" y="1" width="15" height="2" fill="#f8e48a"/>
<rect x="1" y="0" width="6" height="1" fill="#d99a30"/>
<rect x="8" y="1" width="7" height="1" fill="#dfa43a"/>
<rect x="0" y="1" width="1" height="12" fill="#dc9a28"/>
<rect x="1" y="3" width="1" height="10" fill="#f0c850"/>
<rect x="2" y="3" width="14" height="1" fill="#d9982a"/>
<rect x="2" y="4" width="14" height="8" fill="url(#fg)"/>
<rect x="1" y="12" width="15" height="1" fill="#e6ad2e"/>
</svg>
<svg style="position:absolute;left:128px;top:584px" width="6" height="9" viewBox="0 0 6 9"><path d="M0.3 0.3L5.2 4.5L0.3 8.7L2.6 4.5Z" fill="#555"/></svg>
<div class="t" style="left:159px;top:587.19px;">CLSID</div>
<div class="r" style="left:241px;width:72px;top:587.19px">0</div>
<div class="r" style="left:319px;width:81px;top:587.19px">5</div>
<div class="t" style="left:411px;top:587.19px;">2020-07-20 13:22:44</div>
<div style="position:absolute;left:153px;top:618px;width:388px;height:1px;background:#d4d4d4"></div>
<div style="position:absolute;left:153px;top:597px;width:1px;height:21px;background:#d4d4d4"></div>
<div style="position:absolute;left:241px;top:597px;width:1px;height:21px;background:#d4d4d4"></div>
<div style="position:absolute;left:319px;top:597px;width:1px;height:21px;background:#d4d4d4"></div>
<div style="position:absolute;left:405px;top:597px;width:1px;height:21px;background:#d4d4d4"></div>
<div style="position:absolute;left:540px;top:597px;width:1px;height:21px;background:#d4d4d4"></div>
<svg style="position:absolute;left:137px;top:603px" width="16" height="13" viewBox="0 0 16 13" shape-rendering="crispEdges">
<defs><linearGradient id="fg" x1="0" y1="0" x2="0" y2="1"><stop offset="0" stop-color="#fffce0"/><stop offset="0.35" stop-color="#fbeea0"/><stop offset="0.5" stop-color="#f6e070"/><stop offset="1" stop-color="#f2d648"/></linearGradient></defs>
<rect x="1" y="1" width="15" height="2" fill="#f8e48a"/>
<rect x="1" y="0" width="6" height="1" fill="#d99a30"/>
<rect x="8" y="1" width="7" height="1" fill="#dfa43a"/>
<rect x="0" y="1" width="1" height="12" fill="#dc9a28"/>
<rect x="1" y="3" width="1" height="10" fill="#f0c850"/>
<rect x="2" y="3" width="14" height="1" fill="#d9982a"/>
<rect x="2" y="4" width="14" height="8" fill="url(#fg)"/>
<rect x="1" y="12" width="15" height="1" fill="#e6ad2e"/>
</svg>
<svg style="position:absolute;left:128px;top:605px" width="6" height="9" viewBox="0 0 6 9"><path d="M0.3 0.3L5.2 4.5L0.3 8.7L2.6 4.5Z" fill="#555"/></svg>
<div class="t" style="left:159px;top:608.19px;">ComDlg32</div>
<div class="r" style="left:241px;width:72px;top:608.19px">0</div>
<div class="r" style="left:319px;width:81px;top:608.19px">4</div>
<div class="t" style="left:411px;top:608.19px;">2020-07-20 13:58:00</div>
<div style="position:absolute;left:153px;top:639px;width:388px;height:1px;background:#d4d4d4"></div>
<div style="position:absolute;left:153px;top:618px;width:1px;height:21px;background:#d4d4d4"></div>
<div style="position:absolute;left:241px;top:618px;width:1px;height:21px;background:#d4d4d4"></div>
<div style="position:absolute;left:319px;top:618px;width:1px;height:21px;background:#d4d4d4"></div>
<div style="position:absolute;left:405px;top:618px;width:1px;height:21px;background:#d4d4d4"></div>
<div style="position:absolute;left:540px;top:618px;width:1px;height:21px;background:#d4d4d4"></div>
<svg style="position:absolute;left:137px;top:624px" width="16" height="13" viewBox="0 0 16 13" shape-rendering="crispEdges">
<defs><linearGradient id="fg" x1="0" y1="0" x2="0" y2="1"><stop offset="0" stop-color="#fffce0"/><stop offset="0.35" stop-color="#fbeea0"/><stop offset="0.5" stop-color="#f6e070"/><stop offset="1" stop-color="#f2d648"/></linearGradient></defs>
<rect x="1" y="1" width="15" height="2" fill="#f8e48a"/>
<rect x="1" y="0" width="6" height="1" fill="#d99a30"/>
<rect x="8" y="1" width="7" height="1" fill="#dfa43a"/>
<rect x="0" y="1" width="1" height="12" fill="#dc9a28"/>
<rect x="1" y="3" width="1" height="10" fill="#f0c850"/>
<rect x="2" y="3" width="14" height="1" fill="#d9982a"/>
<rect x="2" y="4" width="14" height="8" fill="url(#fg)"/>
<rect x="1" y="12" width="15" height="1" fill="#e6ad2e"/>
</svg>
<svg style="position:absolute;left:128px;top:626px" width="6" height="9" viewBox="0 0 6 9"><path d="M0.3 0.3L5.2 4.5L0.3 8.7L2.6 4.5Z" fill="#555"/></svg>
<div class="t" style="left:159px;top:629.19px;">Discardable</div>
<div class="r" style="left:241px;width:72px;top:629.19px">0</div>
<div class="r" style="left:319px;width:81px;top:629.19px">1</div>
<div class="t" style="left:411px;top:629.19px;">2020-07-20 13:56:59</div>
<div style="position:absolute;left:153px;top:660px;width:388px;height:1px;background:#d4d4d4"></div>
<div style="position:absolute;left:153px;top:639px;width:1px;height:21px;background:#d4d4d4"></div>
<div style="position:absolute;left:241px;top:639px;width:1px;height:21px;background:#d4d4d4"></div>
<div style="position:absolute;left:319px;top:639px;width:1px;height:21px;background:#d4d4d4"></div>
<div style="position:absolute;left:405px;top:639px;width:1px;height:21px;background:#d4d4d4"></div>
<div style="position:absolute;left:540px;top:639px;width:1px;height:21px;background:#d4d4d4"></div>
<svg style="position:absolute;left:137px;top:645px" width="16" height="13" viewBox="0 0 16 13" shape-rendering="crispEdges">
<defs><linearGradient id="fg" x1="0" y1="0" x2="0" y2="1"><stop offset="0" stop-color="#fffce0"/><stop offset="0.35" stop-color="#fbeea0"/><stop offset="0.5" stop-color="#f6e070"/><stop offset="1" stop-color="#f2d648"/></linearGradient></defs>
<rect x="1" y="1" width="15" height="2" fill="#f8e48a"/>
<rect x="1" y="0" width="6" height="1" fill="#d99a30"/>
<rect x="8" y="1" width="7" height="1" fill="#dfa43a"/>
<rect x="0" y="1" width="1" height="12" fill="#dc9a28"/>
<rect x="1" y="3" width="1" height="10" fill="#f0c850"/>
<rect x="2" y="3" width="14" height="1" fill="#d9982a"/>
<rect x="2" y="4" width="14" height="8" fill="url(#fg)"/>
<rect x="1" y="12" width="15" height="1" fill="#e6ad2e"/>
</svg>
<svg style="position:absolute;left:128px;top:647px" width="6" height="9" viewBox="0 0 6 9"><path d="M0.3 0.3L5.2 4.5L0.3 8.7L2.6 4.5Z" fill="#555"/></svg>
<div class="t" style="left:159px;top:650.19px;">FileExts</div>
<div class="r" style="left:241px;width:72px;top:650.19px">0</div>
<div class="r" style="left:319px;width:81px;top:650.19px">102</div>
<div class="t" style="left:411px;top:650.19px;">2020-07-20 14:01:51</div>
<div style="position:absolute;left:153px;top:681px;width:388px;height:1px;background:#d4d4d4"></div>
<div style="position:absolute;left:153px;top:660px;width:1px;height:21px;background:#d4d4d4"></div>
<div style="position:absolute;left:241px;top:660px;width:1px;height:21px;background:#d4d4d4"></div>
<div style="position:absolute;left:319px;top:660px;width:1px;height:21px;background:#d4d4d4"></div>
<div style="position:absolute;left:405px;top:660px;width:1px;height:21px;background:#d4d4d4"></div>
<div style="position:absolute;left:540px;top:660px;width:1px;height:21px;background:#d4d4d4"></div>
<svg style="position:absolute;left:137px;top:666px" width="16" height="13" viewBox="0 0 16 13" shape-rendering="crispEdges">
<defs><linearGradient id="fg" x1="0" y1="0" x2="0" y2="1"><stop offset="0" stop-color="#fffce0"/><stop offset="0.35" stop-color="#fbeea0"/><stop offset="0.5" stop-color="#f6e070"/><stop offset="1" stop-color="#f2d648"/></linearGradient></defs>
<rect x="1" y="1" width="15" height="2" fill="#f8e48a"/>
<rect x="1" y="0" width="6" height="1" fill="#d99a30"/>
<rect x="8" y="1" width="7" height="1" fill="#dfa43a"/>
<rect x="0" y="1" width="1" height="12" fill="#dc9a28"/>
<rect x="1" y="3" width="1" height="10" fill="#f0c850"/>
<rect x="2" y="3" width="14" height="1" fill="#d9982a"/>
<rect x="2" y="4" width="14" height="8" fill="url(#fg)"/>
<rect x="1" y="12" width="15" height="1" fill="#e6ad2e"/>
</svg>
<div class="t" style="left:159px;top:671.19px;">LowRegistry</div>
<div class="r" style="left:241px;width:72px;top:671.19px">0</div>
<div class="r" style="left:319px;width:81px;top:671.19px">0</div>
<div class="t" style="left:411px;top:671.19px;">2020-07-20 13:22:34</div>
<div style="position:absolute;left:153px;top:702px;width:388px;height:1px;background:#d4d4d4"></div>
<div style="position:absolute;left:153px;top:681px;width:1px;height:21px;background:#d4d4d4"></div>
<div style="position:absolute;left:241px;top:681px;width:1px;height:21px;background:#d4d4d4"></div>
<div style="position:absolute;left:319px;top:681px;width:1px;height:21px;background:#d4d4d4"></div>
<div style="position:absolute;left:405px;top:681px;width:1px;height:21px;background:#d4d4d4"></div>
<div style="position:absolute;left:540px;top:681px;width:1px;height:21px;background:#d4d4d4"></div>
<svg style="position:absolute;left:137px;top:687px" width="16" height="13" viewBox="0 0 16 13" shape-rendering="crispEdges">
<defs><linearGradient id="fg" x1="0" y1="0" x2="0" y2="1"><stop offset="0" stop-color="#fffce0"/><stop offset="0.35" stop-color="#fbeea0"/><stop offset="0.5" stop-color="#f6e070"/><stop offset="1" stop-color="#f2d648"/></linearGradient></defs>
<rect x="1" y="1" width="15" height="2" fill="#f8e48a"/>
<rect x="1" y="0" width="6" height="1" fill="#d99a30"/>
<rect x="8" y="1" width="7" height="1" fill="#dfa43a"/>
<rect x="0" y="1" width="1" height="12" fill="#dc9a28"/>
<rect x="1" y="3" width="1" height="10" fill="#f0c850"/>
<rect x="2" y="3" width="14" height="1" fill="#d9982a"/>
<rect x="2" y="4" width="14" height="8" fill="url(#fg)"/>
<rect x="1" y="12" width="15" height="1" fill="#e6ad2e"/>
</svg>
<svg style="position:absolute;left:128px;top:689px" width="6" height="9" viewBox="0 0 6 9"><path d="M0.3 0.3L5.2 4.5L0.3 8.7L2.6 4.5Z" fill="#555"/></svg>
<div class="t" style="left:159px;top:692.19px;">MenuOrder</div>
<div class="r" style="left:241px;width:72px;top:692.19px">0</div>
<div class="r" style="left:319px;width:81px;top:692.19px">1</div>
<div class="t" style="left:411px;top:692.19px;">2020-07-20 13:22:34</div>
<div style="position:absolute;left:153px;top:723px;width:388px;height:1px;background:#d4d4d4"></div>
<div style="position:absolute;left:153px;top:702px;width:1px;height:21px;background:#d4d4d4"></div>
<div style="position:absolute;left:241px;top:702px;width:1px;height:21px;background:#d4d4d4"></div>
<div style="position:absolute;left:319px;top:702px;width:1px;height:21px;background:#d4d4d4"></div>
<div style="position:absolute;left:405px;top:702px;width:1px;height:21px;background:#d4d4d4"></div>
<div style="position:absolute;left:540px;top:702px;width:1px;height:21px;background:#d4d4d4"></div>
<svg style="position:absolute;left:137px;top:708px" width="16" height="13" viewBox="0 0 16 13" shape-rendering="crispEdges">
<defs><linearGradient id="fg" x1="0" y1="0" x2="0" y2="1"><stop offset="0" stop-color="#fffce0"/><stop offset="0.35" stop-color="#fbeea0"/><stop offset="0.5" stop-color="#f6e070"/><stop offset="1" stop-color="#f2d648"/></linearGradient></defs>
<rect x="1" y="1" width="15" height="2" fill="#f8e48a"/>
<rect x="1" y="0" width="6" height="1" fill="#d99a30"/>
<rect x="8" y="1" width="7" height="1" fill="#dfa43a"/>
<rect x="0" y="1" width="1" height="12" fill="#dc9a28"/>
<rect x="1" y="3" width="1" height="10" fill="#f0c850"/>
<rect x="2" y="3" width="14" height="1" fill="#d9982a"/>
<rect x="2" y="4" width="14" height="8" fill="url(#fg)"/>
<rect x="1" y="12" width="15" height="1" fill="#e6ad2e"/>
</svg>
<svg style="position:absolute;left:128px;top:710px" width="6" height="9" viewBox="0 0 6 9"><path d="M0.3 0.3L5.2 4.5L0.3 8.7L2.6 4.5Z" fill="#555"/></svg>
<div class="t" style="left:159px;top:713.19px;">Modules</div>
<div class="r" style="left:241px;width:72px;top:713.19px">0</div>
<div class="r" style="left:319px;width:81px;top:713.19px">3</div>
<div class="t" style="left:411px;top:713.19px;">2020-07-21 18:20:25</div>
<div style="position:absolute;left:153px;top:744px;width:388px;height:1px;background:#d4d4d4"></div>
<div style="position:absolute;left:153px;top:723px;width:1px;height:21px;background:#d4d4d4"></div>
<div style="position:absolute;left:241px;top:723px;width:1px;height:21px;background:#d4d4d4"></div>
<div style="position:absolute;left:319px;top:723px;width:1px;height:21px;background:#d4d4d4"></div>
<div style="position:absolute;left:405px;top:723px;width:1px;height:21px;background:#d4d4d4"></div>
<div style="position:absolute;left:540px;top:723px;width:1px;height:21px;background:#d4d4d4"></div>
<svg style="position:absolute;left:137px;top:729px" width="16" height="13" viewBox="0 0 16 13" shape-rendering="crispEdges">
<defs><linearGradient id="fg" x1="0" y1="0" x2="0" y2="1"><stop offset="0" stop-color="#fffce0"/><stop offset="0.35" stop-color="#fbeea0"/><stop offset="0.5" stop-color="#f6e070"/><stop offset="1" stop-color="#f2d648"/></linearGradient></defs>
<rect x="1" y="1" width="15" height="2" fill="#f8e48a"/>
<rect x="1" y="0" width="6" height="1" fill="#d99a30"/>
<rect x="8" y="1" width="7" height="1" fill="#dfa43a"/>
<rect x="0" y="1" width="1" height="12" fill="#dc9a28"/>
<rect x="1" y="3" width="1" height="10" fill="#f0c850"/>
<rect x="2" y="3" width="14" height="1" fill="#d9982a"/>
<rect x="2" y="4" width="14" height="8" fill="url(#fg)"/>
<rect x="1" y="12" width="15" height="1" fill="#e6ad2e"/>
</svg>
<svg style="position:absolute;left:128px;top:731px" width="6" height="9" viewBox="0 0 6 9"><path d="M0.3 0.3L5.2 4.5L0.3 8.7L2.6 4.5Z" fill="#555"/></svg>
<div class="t" style="left:159px;top:734.19px;">MountPoints2</div>
<div class="r" style="left:241px;width:72px;top:734.19px">0</div>
<div class="r" style="left:319px;width:81px;top:734.19px">4</div>
<div class="t" style="left:411px;top:734.19px;">2020-07-21 18:22:36</div>
<div style="position:absolute;left:153px;top:765px;width:388px;height:1px;background:#d4d4d4"></div>
<div style="position:absolute;left:153px;top:744px;width:1px;height:21px;background:#d4d4d4"></div>
<div style="position:absolute;left:241px;top:744px;width:1px;height:21px;background:#d4d4d4"></div>
<div style="position:absolute;left:319px;top:744px;width:1px;height:21px;background:#d4d4d4"></div>
<div style="position:absolute;left:405px;top:744px;width:1px;height:21px;background:#d4d4d4"></div>
<div style="position:absolute;left:540px;top:744px;width:1px;height:21px;background:#d4d4d4"></div>
<svg style="position:absolute;left:137px;top:750px" width="16" height="13" viewBox="0 0 16 13" shape-rendering="crispEdges">
<defs><linearGradient id="fg" x1="0" y1="0" x2="0" y2="1"><stop offset="0" stop-color="#fffce0"/><stop offset="0.35" stop-color="#fbeea0"/><stop offset="0.5" stop-color="#f6e070"/><stop offset="1" stop-color="#f2d648"/></linearGradient></defs>
<rect x="1" y="1" width="15" height="2" fill="#f8e48a"/>
<rect x="1" y="0" width="6" height="1" fill="#d99a30"/>
<rect x="8" y="1" width="7" height="1" fill="#dfa43a"/>
<rect x="0" y="1" width="1" height="12" fill="#dc9a28"/>
<rect x="1" y="3" width="1" height="10" fill="#f0c850"/>
<rect x="2" y="3" width="14" height="1" fill="#d9982a"/>
<rect x="2" y="4" width="14" height="8" fill="url(#fg)"/>
<rect x="1" y="12" width="15" height="1" fill="#e6ad2e"/>
</svg>
<div class="t" style="left:159px;top:755.19px;">NewShortcut...</div>
<div class="r" style="left:241px;width:72px;top:755.19px">1</div>
<div class="r" style="left:319px;width:81px;top:755.19px">0</div>
<div class="t" style="left:411px;top:755.19px;">2020-07-20 13:22:36</div>
<div style="position:absolute;left:153px;top:786px;width:388px;height:1px;background:#d4d4d4"></div>
<div style="position:absolute;left:153px;top:765px;width:1px;height:21px;background:#d4d4d4"></div>
<div style="position:absolute;left:241px;top:765px;width:1px;height:21px;background:#d4d4d4"></div>
<div style="position:absolute;left:319px;top:765px;width:1px;height:21px;background:#d4d4d4"></div>
<div style="position:absolute;left:405px;top:765px;width:1px;height:21px;background:#d4d4d4"></div>
<div style="position:absolute;left:540px;top:765px;width:1px;height:21px;background:#d4d4d4"></div>
<svg style="position:absolute;left:137px;top:771px" width="16" height="13" viewBox="0 0 16 13" shape-rendering="crispEdges">
<defs><linearGradient id="fg" x1="0" y1="0" x2="0" y2="1"><stop offset="0" stop-color="#fffce0"/><stop offset="0.35" stop-color="#fbeea0"/><stop offset="0.5" stop-color="#f6e070"/><stop offset="1" stop-color="#f2d648"/></linearGradient></defs>
<rect x="1" y="1" width="15" height="2" fill="#f8e48a"/>
<rect x="1" y="0" width="6" height="1" fill="#d99a30"/>
<rect x="8" y="1" width="7" height="1" fill="#dfa43a"/>
<rect x="0" y="1" width="1" height="12" fill="#dc9a28"/>
<rect x="1" y="3" width="1" height="10" fill="#f0c850"/>
<rect x="2" y="3" width="14" height="1" fill="#d9982a"/>
<rect x="2" y="4" width="14" height="8" fill="url(#fg)"/>
<rect x="1" y="12" width="15" height="1" fill="#e6ad2e"/>
</svg>
<svg style="position:absolute;left:126px;top:775px" width="9" height="6" viewBox="0 0 9 6"><path d="M0.2 0.5L4.5 5.6L8.8 0.5L4.5 3Z" fill="#555"/></svg>
<div class="t" style="left:159px;top:776.19px;">RecentDocs</div>
<div class="r" style="left:241px;width:72px;top:776.19px">3</div>
<div class="r" style="left:319px;width:81px;top:776.19px">2</div>
<div class="t" style="left:411px;top:776.19px;">2020-07-21 18:38:33</div>
<div style="position:absolute;left:25px;top:787px;width:516px;height:20px;background:#dcdcdc"></div>
<div style="position:absolute;left:167px;top:787px;width:74px;height:20px;background:#fff"></div>
<div style="position:absolute;left:167px;top:807px;width:374px;height:1px;background:#d4d4d4"></div>
<div style="position:absolute;left:167px;top:786px;width:1px;height:21px;background:#d4d4d4"></div>
<div style="position:absolute;left:241px;top:786px;width:1px;height:21px;background:#d4d4d4"></div>
<div style="position:absolute;left:319px;top:786px;width:1px;height:21px;background:#d4d4d4"></div>
<div style="position:absolute;left:405px;top:786px;width:1px;height:21px;background:#d4d4d4"></div>
<div style="position:absolute;left:540px;top:786px;width:1px;height:21px;background:#d4d4d4"></div>
<svg style="position:absolute;left:151px;top:792px" width="16" height="13" viewBox="0 0 16 13" shape-rendering="crispEdges">
<defs><linearGradient id="fg" x1="0" y1="0" x2="0" y2="1"><stop offset="0" stop-color="#fffce0"/><stop offset="0.35" stop-color="#fbeea0"/><stop offset="0.5" stop-color="#f6e070"/><stop offset="1" stop-color="#f2d648"/></linearGradient></defs>
<rect x="1" y="1" width="15" height="2" fill="#f8e48a"/>
<rect x="1" y="0" width="6" height="1" fill="#d99a30"/>
<rect x="8" y="1" width="7" height="1" fill="#dfa43a"/>
<rect x="0" y="1" width="1" height="12" fill="#dc9a28"/>
<rect x="1" y="3" width="1" height="10" fill="#f0c850"/>
<rect x="2" y="3" width="14" height="1" fill="#d9982a"/>
<rect x="2" y="4" width="14" height="8" fill="url(#fg)"/>
<rect x="1" y="12" width="15" height="1" fill="#e6ad2e"/>
</svg>
<div class="t" style="left:173px;top:797.19px;font-weight:bold">.jpg</div>
<div class="r" style="left:241px;width:72px;top:797.19px">2</div>
<div class="r" style="left:319px;width:81px;top:797.19px">0</div>
<div class="t" style="left:411px;top:797.19px;">2020-07-21 18:38:33</div>
<div style="position:absolute;left:167px;top:828px;width:374px;height:1px;background:#d4d4d4"></div>
<div style="position:absolute;left:167px;top:807px;width:1px;height:21px;background:#d4d4d4"></div>
<div style="position:absolute;left:241px;top:807px;width:1px;height:21px;background:#d4d4d4"></div>
<div style="position:absolute;left:319px;top:807px;width:1px;height:21px;background:#d4d4d4"></div>
<div style="position:absolute;left:405px;top:807px;width:1px;height:21px;background:#d4d4d4"></div>
<div style="position:absolute;left:540px;top:807px;width:1px;height:21px;background:#d4d4d4"></div>
<svg style="position:absolute;left:151px;top:813px" width="16" height="13" viewBox="0 0 16 13" shape-rendering="crispEdges">
<defs><linearGradient id="fg" x1="0" y1="0" x2="0" y2="1"><stop offset="0" stop-color="#fffce0"/><stop offset="0.35" stop-color="#fbeea0"/><stop offset="0.5" stop-color="#f6e070"/><stop offset="1" stop-color="#f2d648"/></linearGradient></defs>
<rect x="1" y="1" width="15" height="2" fill="#f8e48a"/>
<rect x="1" y="0" width="6" height="1" fill="#d99a30"/>
<rect x="8" y="1" width="7" height="1" fill="#dfa43a"/>
<rect x="0" y="1" width="1" height="12" fill="#dc9a28"/>
<rect x="1" y="3" width="1" height="10" fill="#f0c850"/>
<rect x="2" y="3" width="14" height="1" fill="#d9982a"/>
<rect x="2" y="4" width="14" height="8" fill="url(#fg)"/>
<rect x="1" y="12" width="15" height="1" fill="#e6ad2e"/>
</svg>
<div class="t" style="left:173px;top:818.19px;">Folder</div>
<div class="r" style="left:241px;width:72px;top:818.19px">2</div>
<div class="r" style="left:319px;width:81px;top:818.19px">0</div>
<div class="t" style="left:411px;top:818.19px;">2020-07-21 18:38:33</div>
<svg style="position:absolute;left:7px;top:793px" width="10" height="8" viewBox="0 0 10 8"><path d="M0 4H9M5.5 0.5L9 4L5.5 7.5" fill="none" stroke="#1e6fd9" stroke-width="1.1"/></svg>
<div style="position:absolute;left:589px;top:55px;width:1153px;height:28px;background:#f2f2f2"></div>
<div style="position:absolute;left:590px;top:57px;width:53px;height:27px;background:#dedede;border:1px solid #a8a8a8;border-bottom:none"></div>
<div class="t" style="left:600px;top:70.19px;color:#333">Values</div>
<div style="position:absolute;left:642px;top:56px;width:114px;height:28px;background:#f2f2f2;border-top:1px solid #a8a8a8;border-left:1px solid #a8a8a8;border-right:1px solid #a8a8a8"></div>
<div class="t" style="left:653px;top:70.19px;color:#333">Recent documents</div>
<div style="position:absolute;left:589px;top:82px;width:54px;height:2px;background:#b0b0b0"></div>
<div style="position:absolute;left:756px;top:82px;width:986px;height:2px;background:#b0b0b0"></div>
<div style="position:absolute;left:643px;top:83px;width:113px;height:1px;background:#dcdcdc"></div>
<div style="position:absolute;left:589px;top:82px;width:2px;height:479px;background:#a8a8a8"></div>
<div style="position:absolute;left:589px;top:623px;width:2px;height:193px;background:#a8a8a8"></div>
<div style="position:absolute;left:591px;top:84px;width:1151px;height:477px;background:#fff"></div>
<div class="t" style="left:595px;top:101.19px;color:#8a8a8a">Drag a column header here to group by that column</div>
<div style="position:absolute;left:591px;top:116px;width:1151px;height:26px;background:#f2f2f2;border-top:1px solid #d4d4d4;border-bottom:1px solid #d4d4d4"></div>
<div style="position:absolute;left:615px;top:116px;width:1px;height:48px;background:#d4d4d4"></div>
<div style="position:absolute;left:800px;top:116px;width:1px;height:48px;background:#d4d4d4"></div>
<div style="position:absolute;left:985px;top:116px;width:1px;height:48px;background:#d4d4d4"></div>
<div style="position:absolute;left:1170px;top:116px;width:1px;height:48px;background:#d4d4d4"></div>
<div style="position:absolute;left:1355px;top:116px;width:1px;height:48px;background:#d4d4d4"></div>
<div style="position:absolute;left:1540px;top:116px;width:1px;height:48px;background:#d4d4d4"></div>
<div style="position:absolute;left:1725px;top:116px;width:1px;height:48px;background:#d4d4d4"></div>
<div class="t" style="left:621px;top:129.19px;">Extension</div>
<div class="t" style="left:806px;top:129.19px;">Value Name</div>
<div class="t" style="left:991px;top:129.19px;">Target Name</div>
<div class="t" style="left:1176px;top:129.19px;">Lnk Name</div>
<div class="t" style="left:1361px;top:129.19px;">Mru Position</div>
<div class="t" style="left:1546px;top:129.19px;">Opened On</div>
<div class="t" style="left:1731px;top:129.19px;">Ex</div>
<div style="position:absolute;left:591px;top:163px;width:1151px;height:1px;background:#d4d4d4"></div>
<div style="position:absolute;left:591px;top:165px;width:1151px;height:1px;background:#d4d4d4"></div>
<svg style="position:absolute;left:598px;top:148px" width="10" height="9" viewBox="0 0 10 9"><path d="M0 0H10L6 4V9H4V4Z" fill="#808080"/></svg>
<svg style="position:absolute;left:621px;top:147px" width="16" height="11" viewBox="0 0 16 11" shape-rendering="crispEdges"><g fill="#5a5a5a"><rect x="0" y="3" width="1" height="1"/><rect x="1" y="3" width="1" height="1"/><rect x="2" y="3" width="1" height="1"/><rect x="0" y="4" width="1" height="1"/><rect x="2" y="4" width="1" height="1"/><rect x="0" y="5" width="1" height="1"/><rect x="1" y="5" width="1" height="1"/><rect x="2" y="5" width="1" height="1"/><rect x="0" y="6" width="1" height="1"/><rect x="2" y="6" width="1" height="1"/><rect x="0" y="7" width="1" height="1"/><rect x="2" y="7" width="1" height="1"/></g><rect x="4" y="0" width="7" height="11" rx="1" fill="#2f8a4e"/><g fill="#fff"><rect x="6" y="3" width="1" height="1"/><rect x="7" y="3" width="1" height="1"/><rect x="8" y="3" width="1" height="1"/><rect x="6" y="4" width="1" height="1"/><rect x="8" y="4" width="1" height="1"/><rect x="6" y="5" width="1" height="1"/><rect x="7" y="5" width="1" height="1"/><rect x="8" y="5" width="1" height="1"/><rect x="6" y="6" width="1" height="1"/><rect x="8" y="6" width="1" height="1"/><rect x="6" y="7" width="1" height="1"/><rect x="7" y="7" width="1" height="1"/><rect x="8" y="7" width="1" height="1"/></g><g fill="#5a5a5a"><rect x="12" y="3" width="1" height="1"/><rect x="13" y="3" width="1" height="1"/><rect x="14" y="3" width="1" height="1"/><rect x="12" y="4" width="1" height="1"/><rect x="12" y="5" width="1" height="1"/><rect x="12" y="6" width="1" height="1"/><rect x="12" y="7" width="1" height="1"/><rect x="13" y="7" width="1" height="1"/><rect x="14" y="7" width="1" height="1"/></g></svg>
<svg style="position:absolute;left:806px;top:147px" width="16" height="11" viewBox="0 0 16 11" shape-rendering="crispEdges"><g fill="#5a5a5a"><rect x="0" y="3" width="1" height="1"/><rect x="1" y="3" width="1" height="1"/><rect x="2" y="3" width="1" height="1"/><rect x="0" y="4" width="1" height="1"/><rect x="2" y="4" width="1" height="1"/><rect x="0" y="5" width="1" height="1"/><rect x="1" y="5" width="1" height="1"/><rect x="2" y="5" width="1" height="1"/><rect x="0" y="6" width="1" height="1"/><rect x="2" y="6" width="1" height="1"/><rect x="0" y="7" width="1" height="1"/><rect x="2" y="7" width="1" height="1"/></g><rect x="4" y="0" width="7" height="11" rx="1" fill="#2f8a4e"/><g fill="#fff"><rect x="6" y="3" width="1" height="1"/><rect x="7" y="3" width="1" height="1"/><rect x="8" y="3" width="1" height="1"/><rect x="6" y="4" width="1" height="1"/><rect x="8" y="4" width="1" height="1"/><rect x="6" y="5" width="1" height="1"/><rect x="7" y="5" width="1" height="1"/><rect x="8" y="5" width="1" height="1"/><rect x="6" y="6" width="1" height="1"/><rect x="8" y="6" width="1" height="1"/><rect x="6" y="7" width="1" height="1"/><rect x="7" y="7" width="1" height="1"/><rect x="8" y="7" width="1" height="1"/></g><g fill="#5a5a5a"><rect x="12" y="3" width="1" height="1"/><rect x="13" y="3" width="1" height="1"/><rect x="14" y="3" width="1" height="1"/><rect x="12" y="4" width="1" height="1"/><rect x="12" y="5" width="1" height="1"/><rect x="12" y="6" width="1" height="1"/><rect x="12" y="7" width="1" height="1"/><rect x="13" y="7" width="1" height="1"/><rect x="14" y="7" width="1" height="1"/></g></svg>
<svg style="position:absolute;left:991px;top:147px" width="16" height="11" viewBox="0 0 16 11" shape-rendering="crispEdges"><g fill="#5a5a5a"><rect x="0" y="3" width="1" height="1"/><rect x="1" y="3" width="1" height="1"/><rect x="2" y="3" width="1" height="1"/><rect x="0" y="4" width="1" height="1"/><rect x="2" y="4" width="1" height="1"/><rect x="0" y="5" width="1" height="1"/><rect x="1" y="5" width="1" height="1"/><rect x="2" y="5" width="1" height="1"/><rect x="0" y="6" width="1" height="1"/><rect x="2" y="6" width="1" height="1"/><rect x="0" y="7" width="1" height="1"/><rect x="2" y="7" width="1" height="1"/></g><rect x="4" y="0" width="7" height="11" rx="1" fill="#2f8a4e"/><g fill="#fff"><rect x="6" y="3" width="1" height="1"/><rect x="7" y="3" width="1" height="1"/><rect x="8" y="3" width="1" height="1"/><rect x="6" y="4" width="1" height="1"/><rect x="8" y="4" width="1" height="1"/><rect x="6" y="5" width="1" height="1"/><rect x="7" y="5" width="1" height="1"/><rect x="8" y="5" width="1" height="1"/><rect x="6" y="6" width="1" height="1"/><rect x="8" y="6" width="1" height="1"/><rect x="6" y="7" width="1" height="1"/><rect x="7" y="7" width="1" height="1"/><rect x="8" y="7" width="1" height="1"/></g><g fill="#5a5a5a"><rect x="12" y="3" width="1" height="1"/><rect x="13" y="3" width="1" height="1"/><rect x="14" y="3" width="1" height="1"/><rect x="12" y="4" width="1" height="1"/><rect x="12" y="5" width="1" height="1"/><rect x="12" y="6" width="1" height="1"/><rect x="12" y="7" width="1" height="1"/><rect x="13" y="7" width="1" height="1"/><rect x="14" y="7" width="1" height="1"/></g></svg>
<svg style="position:absolute;left:1176px;top:147px" width="16" height="11" viewBox="0 0 16 11" shape-rendering="crispEdges"><g fill="#5a5a5a"><rect x="0" y="3" width="1" height="1"/><rect x="1" y="3" width="1" height="1"/><rect x="2" y="3" width="1" height="1"/><rect x="0" y="4" width="1" height="1"/><rect x="2" y="4" width="1" height="1"/><rect x="0" y="5" width="1" height="1"/><rect x="1" y="5" width="1" height="1"/><rect x="2" y="5" width="1" height="1"/><rect x="0" y="6" width="1" height="1"/><rect x="2" y="6" width="1" height="1"/><rect x="0" y="7" width="1" height="1"/><rect x="2" y="7" width="1" height="1"/></g><rect x="4" y="0" width="7" height="11" rx="1" fill="#2f8a4e"/><g fill="#fff"><rect x="6" y="3" width="1" height="1"/><rect x="7" y="3" width="1" height="1"/><rect x="8" y="3" width="1" height="1"/><rect x="6" y="4" width="1" height="1"/><rect x="8" y="4" width="1" height="1"/><rect x="6" y="5" width="1" height="1"/><rect x="7" y="5" width="1" height="1"/><rect x="8" y="5" width="1" height="1"/><rect x="6" y="6" width="1" height="1"/><rect x="8" y="6" width="1" height="1"/><rect x="6" y="7" width="1" height="1"/><rect x="7" y="7" width="1" height="1"/><rect x="8" y="7" width="1" height="1"/></g><g fill="#5a5a5a"><rect x="12" y="3" width="1" height="1"/><rect x="13" y="3" width="1" height="1"/><rect x="14" y="3" width="1" height="1"/><rect x="12" y="4" width="1" height="1"/><rect x="12" y="5" width="1" height="1"/><rect x="12" y="6" width="1" height="1"/><rect x="12" y="7" width="1" height="1"/><rect x="13" y="7" width="1" height="1"/><rect x="14" y="7" width="1" height="1"/></g></svg>
<div style="position:absolute;left:1363px;top:151px;width:9px;height:1px;background:#6a6a6a"></div>
<div style="position:absolute;left:1363px;top:154px;width:9px;height:1px;background:#6a6a6a"></div>
<div style="position:absolute;left:1548px;top:151px;width:9px;height:1px;background:#6a6a6a"></div>
<div style="position:absolute;left:1548px;top:154px;width:9px;height:1px;background:#6a6a6a"></div>
<div style="position:absolute;left:1733px;top:151px;width:9px;height:1px;background:#6a6a6a"></div>
<div style="position:absolute;left:1733px;top:154px;width:9px;height:1px;background:#6a6a6a"></div>
<div style="position:absolute;left:615px;top:166px;width:1127px;height:20px;background:#f2f2f2"></div>
<div style="position:absolute;left:615px;top:186px;width:1127px;height:1px;background:#d4d4d4"></div>
<div style="position:absolute;left:615px;top:166px;width:1px;height:20px;background:#d4d4d4"></div>
<div style="position:absolute;left:800px;top:166px;width:1px;height:20px;background:#d4d4d4"></div>
<div style="position:absolute;left:985px;top:166px;width:1px;height:20px;background:#d4d4d4"></div>
<div style="position:absolute;left:1170px;top:166px;width:1px;height:20px;background:#d4d4d4"></div>
<div style="position:absolute;left:1355px;top:166px;width:1px;height:20px;background:#d4d4d4"></div>
<div style="position:absolute;left:1540px;top:166px;width:1px;height:20px;background:#d4d4d4"></div>
<div style="position:absolute;left:1725px;top:166px;width:1px;height:20px;background:#d4d4d4"></div>
<svg style="position:absolute;left:598px;top:173px" width="10" height="8" viewBox="0 0 10 8"><path d="M0 4H9M5.5 0.5L9 4L5.5 7.5" fill="none" stroke="#1e6fd9" stroke-width="1.1"/></svg>
<div class="t" style="left:623px;top:174.19px;">.jpg</div>
<div class="t" style="left:808px;top:174.19px;">0</div>
<div class="t" style="left:993px;top:174.19px;">1.jpg</div>
<div class="t" style="left:1178px;top:174.19px;">1.lnk</div>
<div class="r" style="left:1355px;width:180px;top:174.19px">0</div>
<div style="position:absolute;left:1541px;top:167px;width:184px;height:19px;background:#1b6bd2;border:1px dotted #fff;border-top:none"></div>
<div class="t" style="left:1547px;top:174.19px;color:#fff">2020-07-21 18:38:33</div>
<div style="position:absolute;left:974px;top:162px;width:767px;height:31px;border:5px solid #fff000"></div>
<div style="position:absolute;left:589px;top:561px;width:1153px;height:25px;background:#464646"></div>
<div style="position:absolute;left:671px;top:561px;width:1px;height:25px;background:#6a6a6a"></div>
<div class="t" style="left:598px;top:573.19px;color:#fff">Total rows: 1</div>
<div style="position:absolute;left:671px;top:598px;width:81px;height:25px;background:#dedede;border:1px solid #a8a8a8;border-bottom:none"></div>
<div class="t" style="left:681px;top:611.19px;color:#333">Slack viewer</div>
<div style="position:absolute;left:589px;top:597px;width:83px;height:27px;background:#f2f2f2;border-top:1px solid #a8a8a8;border-left:1px solid #a8a8a8;border-right:1px solid #a8a8a8"></div>
<div class="t" style="left:600px;top:611.19px;color:#333">Type viewer</div>
<div style="position:absolute;left:589px;top:623px;width:1153px;height:2px;background:#b0b0b0"></div>
<div style="position:absolute;left:591px;top:625px;width:1151px;height:191px;background:#fff"></div>
<div class="t" style="left:677px;top:637.01px;font-size:14.4px;color:#8e8e8e">00</div>
<div class="t" style="left:701px;top:637.01px;font-size:14.4px;color:#8e8e8e">01</div>
<div class="t" style="left:725px;top:637.01px;font-size:14.4px;color:#8e8e8e">02</div>
<div class="t" style="left:749px;top:637.01px;font-size:14.4px;color:#8e8e8e">03</div>
<div class="t" style="left:773px;top:637.01px;font-size:14.4px;color:#8e8e8e">04</div>
<div class="t" style="left:797px;top:637.01px;font-size:14.4px;color:#8e8e8e">05</div>
<div class="t" style="left:821px;top:637.01px;font-size:14.4px;color:#8e8e8e">06</div>
<div class="t" style="left:845px;top:637.01px;font-size:14.4px;color:#8e8e8e">07</div>
<div class="t" style="left:869px;top:637.01px;font-size:14.4px;color:#8e8e8e">08</div>
<div class="t" style="left:893px;top:637.01px;font-size:14.4px;color:#8e8e8e">09</div>
<div class="t" style="left:917px;top:637.01px;font-size:14.4px;color:#8e8e8e">0A</div>
<div class="t" style="left:941px;top:637.01px;font-size:14.4px;color:#8e8e8e">0B</div>
<div class="t" style="left:965px;top:637.01px;font-size:14.4px;color:#8e8e8e">0C</div>
<div class="t" style="left:989px;top:637.01px;font-size:14.4px;color:#8e8e8e">0D</div>
<div class="t" style="left:1013px;top:637.01px;font-size:14.4px;color:#8e8e8e">0E</div>
<div class="t" style="left:1037px;top:637.01px;font-size:14.4px;color:#8e8e8e">0F</div>
<div class="t" style="left:1061px;top:637.01px;font-size:14.4px;color:#8e8e8e">10</div>
<div class="t" style="left:1085px;top:637.01px;font-size:14.4px;color:#8e8e8e">11</div>
<div class="t" style="left:1109px;top:637.01px;font-size:14.4px;color:#8e8e8e">12</div>
<div class="t" style="left:1133px;top:637.01px;font-size:14.4px;color:#8e8e8e">13</div>
<div class="t" style="left:1157px;top:637.01px;font-size:14.4px;color:#8e8e8e">14</div>
<div class="t" style="left:1181px;top:637.01px;font-size:14.4px;color:#8e8e8e">15</div>
<div class="t" style="left:1205px;top:637.01px;font-size:14.4px;color:#8e8e8e">16</div>
<div class="t" style="left:1229px;top:637.01px;font-size:14.4px;color:#8e8e8e">17</div>
<div class="t" style="left:1253px;top:637.01px;font-size:14.4px;color:#8e8e8e">18</div>
<div class="t" style="left:1277px;top:637.01px;font-size:14.4px;color:#8e8e8e">19</div>
<div class="t" style="left:1301px;top:637.01px;font-size:14.4px;color:#8e8e8e">1A</div>
<div class="t" style="left:1325px;top:637.01px;font-size:14.4px;color:#8e8e8e">1B</div>
<div class="t" style="left:1349px;top:637.01px;font-size:14.4px;color:#8e8e8e">1C</div>
<div class="t" style="left:1373px;top:637.01px;font-size:14.4px;color:#8e8e8e">1D</div>
<div class="t" style="left:1397px;top:637.01px;font-size:14.4px;color:#8e8e8e">1E</div>
<div class="t" style="left:1421px;top:637.01px;font-size:14.4px;color:#8e8e8e">1F</div>
<div class="t" style="left:1445px;top:637.01px;font-size:14.4px;color:#8e8e8e">20</div>
<div class="t" style="left:1469px;top:637.01px;font-size:14.4px;color:#8e8e8e">21</div>
<div class="t" style="left:1493px;top:637.01px;font-size:14.4px;color:#8e8e8e">22</div>
<div class="t" style="left:1517px;top:637.01px;font-size:14.4px;color:#8e8e8e">23</div>
<div class="t" style="left:1541px;top:637.01px;font-size:14.4px;color:#8e8e8e">24</div>
<div class="t" style="left:596px;top:656.01px;font-size:14.4px;color:#8e8e8e">00000000</div>
<div class="t" style="left:677px;top:656.01px;font-size:14.4px;color:#505050">00</div>
<div class="t" style="left:701px;top:656.01px;font-size:14.4px;color:#505050">00</div>
<div class="t" style="left:725px;top:656.01px;font-size:14.4px;color:#505050">00</div>
<div class="t" style="left:749px;top:656.01px;font-size:14.4px;color:#505050">00</div>
<div class="t" style="left:773px;top:656.01px;font-size:14.4px;color:#505050">FF</div>
<div class="t" style="left:797px;top:656.01px;font-size:14.4px;color:#505050">FF</div>
<div class="t" style="left:821px;top:656.01px;font-size:14.4px;color:#505050">FF</div>
<div class="t" style="left:845px;top:656.01px;font-size:14.4px;color:#505050">FF</div>
<div style="position:absolute;left:1580px;top:645px;width:8px;height:16px;background:#cfe3fb"></div>
<div class="t" style="left:1580px;top:656.15px;font-size:14px;color:#444">. . . .</div>
<div class="t" style="left:1611px;top:656.15px;font-size:14px;color:#444;letter-spacing:0.9px">ÿÿÿÿ</div>
<div style="position:absolute;left:1705px;top:643px;width:23px;height:24px;background:#eef5fd"></div>
<div style="position:absolute;left:1728px;top:643px;width:14px;height:24px;background:#f5f9fe"></div>
<div style="position:absolute;left:1713px;top:651px;width:8px;height:8px;border-radius:50%;background:#e6e6e6"></div>
</body></html>
